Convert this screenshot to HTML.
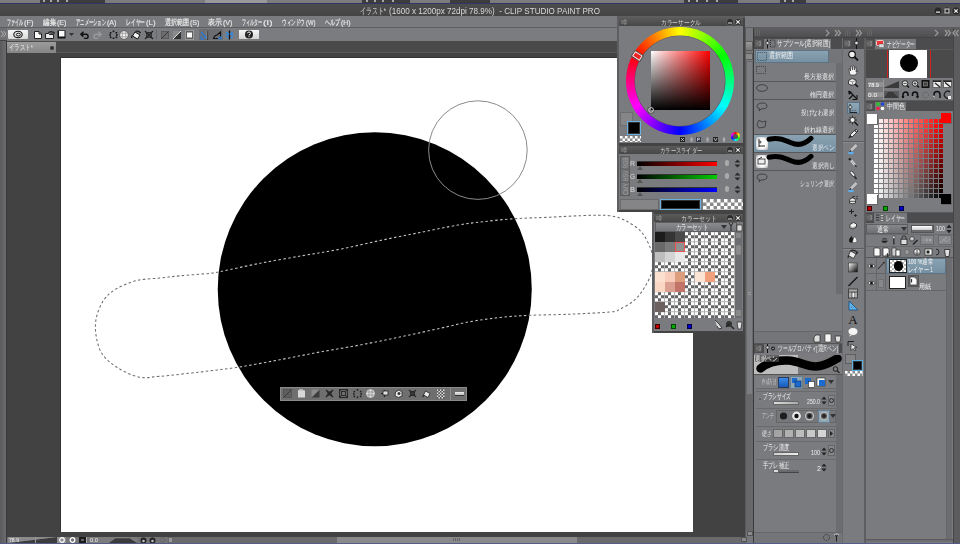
<!DOCTYPE html><html><head><meta charset='utf-8'><style>
*{margin:0;padding:0;box-sizing:border-box}
html,body{width:960px;height:544px;overflow:hidden;background:#444;font-family:"Liberation Sans",sans-serif}
div{position:absolute}
.t{white-space:nowrap;line-height:1;transform-origin:0 0}
</style></head><body>
<div style="left:0px;top:0px;width:960px;height:3px;background:#7c7c7e"></div>
<div style="left:40px;top:0px;width:65px;height:3px;background:#3c3c3c"></div>
<div style="left:362px;top:0px;width:48px;height:3px;background:#3c3c3c"></div>
<div style="left:450px;top:0px;width:40px;height:3px;background:#3c3c3c"></div>
<div style="left:684px;top:0px;width:54px;height:3px;background:#3c3c3c"></div>
<div style="left:780px;top:0px;width:26px;height:3px;background:#3c3c3c"></div>
<div style="left:43px;top:0px;width:2px;height:2px;background:#a8a8a8"></div>
<div style="left:50px;top:0px;width:2px;height:2px;background:#a8a8a8"></div>
<div style="left:57px;top:0px;width:2px;height:2px;background:#a8a8a8"></div>
<div style="left:66px;top:0px;width:2px;height:2px;background:#a8a8a8"></div>
<div style="left:366px;top:0px;width:2px;height:2px;background:#a8a8a8"></div>
<div style="left:374px;top:0px;width:2px;height:2px;background:#a8a8a8"></div>
<div style="left:382px;top:0px;width:2px;height:2px;background:#a8a8a8"></div>
<div style="left:392px;top:0px;width:2px;height:2px;background:#a8a8a8"></div>
<div style="left:688px;top:0px;width:2px;height:2px;background:#a8a8a8"></div>
<div style="left:696px;top:0px;width:2px;height:2px;background:#a8a8a8"></div>
<div style="left:706px;top:0px;width:2px;height:2px;background:#a8a8a8"></div>
<div style="left:716px;top:0px;width:2px;height:2px;background:#a8a8a8"></div>
<div style="left:784px;top:0px;width:2px;height:2px;background:#a8a8a8"></div>
<div style="left:792px;top:0px;width:2px;height:2px;background:#a8a8a8"></div>
<div style="left:205px;top:0px;width:62px;height:3px;background:#999"></div>
<div style="left:0px;top:3px;width:960px;height:1px;background:#2e3766"></div>
<div style="left:0px;top:4px;width:960px;height:12px;background:linear-gradient(#4d4d4d,#444)"></div>
<div class="t" id="t0" style="left:360px;top:7px;font-size:8.5px;color:#dadada;transform:scaleX(0.661);">イラスト*</div>
<div class="t" id="t1" style="left:389px;top:7px;font-size:8.5px;color:#dadada;transform:scaleX(0.952);">(1600 x 1200px 72dpi 78.9%)&nbsp; - CLIP STUDIO PAINT PRO</div>
<svg style="position:absolute;left:933px;top:6px;" width="27" height="10" viewBox="0 0 27 10"><g fill="#2a2a2a" stroke="#5a5a5a" stroke-width="0.8"><circle cx="5" cy="5" r="4.2"/><circle cx="14" cy="5" r="4.2"/><circle cx="23" cy="5" r="4.2"/></g><rect x="3" y="5.5" width="4" height="1.3" fill="#ddd"/><rect x="12" y="3" width="4" height="4" fill="none" stroke="#ddd" stroke-width="1"/><path d="M21.3,3.3 L24.7,6.7 M24.7,3.3 L21.3,6.7" stroke="#eee" stroke-width="1.2"/></svg>
<div style="left:0px;top:16px;width:960px;height:12px;background:#7a7b7e;border-bottom:1px solid #5e5e60"></div>
<div class="t" id="t2" style="left:7px;top:18.5px;font-size:8px;color:#e8e8e8;transform:scaleX(0.500);-webkit-text-stroke:0.2px #e8e8e8;">ファイル</div>
<div class="t" id="t3" style="left:23.5px;top:18.5px;font-size:8px;color:#e8e8e8;transform:scaleX(0.930);-webkit-text-stroke:0.15px #e8e8e8;">(F)</div>
<div class="t" id="t4" style="left:43px;top:18.5px;font-size:8px;color:#e8e8e8;transform:scaleX(0.812);-webkit-text-stroke:0.2px #e8e8e8;">編集</div>
<div class="t" id="t5" style="left:56.5px;top:18.5px;font-size:8px;color:#e8e8e8;transform:scaleX(0.890);-webkit-text-stroke:0.15px #e8e8e8;">(E)</div>
<div class="t" id="t6" style="left:76px;top:18.5px;font-size:8px;color:#e8e8e8;transform:scaleX(0.536);-webkit-text-stroke:0.2px #e8e8e8;">アニメーション</div>
<div class="t" id="t7" style="left:106.5px;top:18.5px;font-size:8px;color:#e8e8e8;transform:scaleX(0.890);-webkit-text-stroke:0.15px #e8e8e8;">(A)</div>
<div class="t" id="t8" style="left:126px;top:18.5px;font-size:8px;color:#e8e8e8;transform:scaleX(0.594);-webkit-text-stroke:0.2px #e8e8e8;">レイヤー</div>
<div class="t" id="t9" style="left:145.5px;top:18.5px;font-size:8px;color:#e8e8e8;transform:scaleX(0.971);-webkit-text-stroke:0.15px #e8e8e8;">(L)</div>
<div class="t" id="t10" style="left:165px;top:18.5px;font-size:8px;color:#e8e8e8;transform:scaleX(0.750);-webkit-text-stroke:0.2px #e8e8e8;">選択範囲</div>
<div class="t" id="t11" style="left:189.5px;top:18.5px;font-size:8px;color:#e8e8e8;transform:scaleX(0.890);-webkit-text-stroke:0.15px #e8e8e8;">(S)</div>
<div class="t" id="t12" style="left:208px;top:18.5px;font-size:8px;color:#e8e8e8;transform:scaleX(0.875);-webkit-text-stroke:0.2px #e8e8e8;">表示</div>
<div class="t" id="t13" style="left:222.5px;top:18.5px;font-size:8px;color:#e8e8e8;transform:scaleX(0.890);-webkit-text-stroke:0.15px #e8e8e8;">(V)</div>
<div class="t" id="t14" style="left:242px;top:18.5px;font-size:8px;color:#e8e8e8;transform:scaleX(0.500);-webkit-text-stroke:0.2px #e8e8e8;">フィルター</div>
<div class="t" id="t15" style="left:262.5px;top:18.5px;font-size:8px;color:#e8e8e8;transform:scaleX(1.256);-webkit-text-stroke:0.15px #e8e8e8;">(I)</div>
<div class="t" id="t16" style="left:282px;top:18.5px;font-size:8px;color:#e8e8e8;transform:scaleX(0.575);-webkit-text-stroke:0.2px #e8e8e8;">ウィンドウ</div>
<div class="t" id="t17" style="left:305.5px;top:18.5px;font-size:8px;color:#e8e8e8;transform:scaleX(0.737);-webkit-text-stroke:0.15px #e8e8e8;">(W)</div>
<div class="t" id="t18" style="left:325px;top:18.5px;font-size:8px;color:#e8e8e8;transform:scaleX(0.625);-webkit-text-stroke:0.2px #e8e8e8;">ヘルプ</div>
<div class="t" id="t19" style="left:340.5px;top:18.5px;font-size:8px;color:#e8e8e8;transform:scaleX(0.855);-webkit-text-stroke:0.15px #e8e8e8;">(H)</div>
<div style="left:0px;top:28px;width:960px;height:13px;background:#7b7c7f"></div>
<svg style="position:absolute;left:0px;top:30px;" width="7" height="8" viewBox="0 0 7 8"><path d="M1,1 L3.5,4 L1,7 M3.5,1 L6,4 L3.5,7" stroke="#aaa" stroke-width="1" fill="none"/></svg>
<div style="left:8px;top:30px;width:20px;height:9px;background:linear-gradient(#f6f6f6,#d8d8d8);border-radius:1px"></div>
<svg style="position:absolute;left:13px;top:30px;" width="10" height="9" viewBox="0 0 10 9"><ellipse cx="5" cy="4.5" rx="4.2" ry="3.2" fill="none" stroke="#111" stroke-width="1.1"/><ellipse cx="5.4" cy="4.6" rx="2.1" ry="1.4" fill="none" stroke="#111" stroke-width="1"/></svg>
<svg style="position:absolute;left:34px;top:31px;" width="8" height="8" viewBox="0 0 8 8"><path d="M0.5,0.5 H5 L7.5,3 V7.5 H0.5 Z" fill="#fafafa" stroke="#222" stroke-width="1"/><path d="M5,0.5 V3 H7.5" fill="none" stroke="#222"/></svg>
<svg style="position:absolute;left:45px;top:31px;" width="10" height="8" viewBox="0 0 10 8"><path d="M0.5,2.5 H3.5 L4.5,3.5 H8.5 V7.5 H0.5 Z" fill="#e8e8e8" stroke="#222"/><path d="M3,1.5 L6,0.5 L9.5,1.5 L8.5,3.5" fill="#555" stroke="#222"/></svg>
<svg style="position:absolute;left:57px;top:30px;" width="10" height="9" viewBox="0 0 10 9"><rect x="0.5" y="0.5" width="8" height="8" fill="#111"/><rect x="2" y="1" width="5.5" height="5.5" fill="#fafafa"/></svg>
<svg style="position:absolute;left:69px;top:33px;" width="5" height="3" viewBox="0 0 5 3"><path d="M0,0 H5 L2.5,3 Z" fill="#333"/></svg>
<svg style="position:absolute;left:80px;top:31px;" width="10" height="8" viewBox="0 0 10 8"><path d="M3.5,0.8 L0.8,3.2 L3.5,5.6 M1,3.2 H6.5 A2.3,2.3 0 0 1 6.5,7.6 H4" fill="none" stroke="#111" stroke-width="1.5"/></svg>
<svg style="position:absolute;left:92px;top:31px;" width="10" height="8" viewBox="0 0 10 8"><path d="M6.5,0.8 L9.2,3.2 L6.5,5.6 M9,3.2 H3.5 A2.3,2.3 0 0 0 3.5,7.6 H6" fill="none" stroke="#9a9a9a" stroke-width="1.5"/></svg>
<svg style="position:absolute;left:109px;top:30px;" width="9" height="9" viewBox="0 0 9 9"><rect x="3.7" y="0.5" width="1.6" height="1.6" fill="#111"/><rect x="0.8" y="2" width="1.6" height="1.6" fill="#111"/><rect x="6.6" y="2" width="1.6" height="1.6" fill="#111"/><rect x="0.3" y="4.2" width="1.6" height="1.6" fill="#111"/><rect x="7" y="4.2" width="1.6" height="1.6" fill="#111"/><rect x="0.8" y="6.5" width="1.6" height="1.6" fill="#111"/><rect x="6.6" y="6.5" width="1.6" height="1.6" fill="#111"/><rect x="3.7" y="7.5" width="1.6" height="1.6" fill="#111"/></svg>
<svg style="position:absolute;left:119px;top:30px;" width="10" height="10" viewBox="0 0 10 10"><circle cx="5" cy="5" r="4.3" fill="#eee" stroke="#555" stroke-width="0.8"/><path d="M3.3,1 V9 M6.7,1 V9 M1,3.3 H9 M1,6.7 H9" stroke="#999" stroke-width="0.8"/></svg>
<svg style="position:absolute;left:131px;top:30px;" width="11" height="10" viewBox="0 0 11 10"><path d="M4,2 L9,5 L6.5,9 L1.5,6 Z" fill="#f2f2f2" stroke="#111"/><path d="M1,5.5 L0.5,8 M4.5,1.5 Q7,0 9.5,3" stroke="#111" fill="none" stroke-width="1.2"/></svg>
<svg style="position:absolute;left:144px;top:30px;" width="10" height="10" viewBox="0 0 10 10"><path d="M1,1 L9,9 M9,1 L1,9" stroke="#222" stroke-width="1.3"/><rect x="2.7" y="2.7" width="4.6" height="4.6" fill="none" stroke="#222" stroke-width="1"/></svg>
<div style="left:156px;top:30px;width:1px;height:9px;background:#686868"></div>
<svg style="position:absolute;left:161px;top:31px;" width="8" height="8" viewBox="0 0 8 8"><rect x="0.5" y="0.5" width="7" height="7" fill="#6e6e6e" stroke="#5a5a5a"/><path d="M0.5,7.5 L7.5,0.5" stroke="#333" stroke-width="1"/></svg>
<svg style="position:absolute;left:173px;top:31px;" width="8" height="8" viewBox="0 0 8 8"><path d="M0,8 L8,0 V8 Z" fill="#333"/><path d="M0,0 H8 L0,8 Z" fill="#8a8a8a"/><path d="M0,8 L8,0" stroke="#ddd"/></svg>
<svg style="position:absolute;left:185px;top:30px;" width="9" height="10" viewBox="0 0 9 10"><rect x="0.5" y="0.5" width="8" height="9" fill="#5e5e5e" stroke="#999"/><rect x="2" y="2.5" width="5" height="5" fill="#fafafa"/></svg>
<div style="left:199px;top:29px;width:24px;height:11px;background:#6c6d70"></div>
<svg style="position:absolute;left:200px;top:30px;" width="9" height="10" viewBox="0 0 9 10"><path d="M1,2 L7.5,9" stroke="#2a7ad8" stroke-width="1.5"/><path d="M7.5,1 V9.5" stroke="#111" stroke-width="1.2"/><path d="M7,1 V9" stroke="#eee" stroke-width="0.5"/><path d="M1,9 H4 M1,6 V9" stroke="#2a7ad8" stroke-width="1.3"/></svg>
<svg style="position:absolute;left:212px;top:30px;" width="10" height="10" viewBox="0 0 10 10"><path d="M1.5,8.5 Q2,5.5 5,5 L8.5,2 V8.5 Z" fill="none" stroke="#111" stroke-width="1.1"/><path d="M6,8.5 H9 V6" stroke="#2a7ad8" stroke-width="1.4" fill="none"/></svg>
<svg style="position:absolute;left:225px;top:30px;" width="9" height="10" viewBox="0 0 9 10"><path d="M4.5,0.5 V9.5" stroke="#111" stroke-width="1.4"/><path d="M1,2 L3.5,4 L1,5.5 M8,2 L5.5,4 L8,5.5 M1,6.5 L3.5,8 M8,6.5 L5.5,8" stroke="#2a8ae8" stroke-width="1.3" fill="none"/></svg>
<div style="left:239px;top:30px;width:20px;height:9px;background:linear-gradient(#f6f6f6,#d4d4d4)"></div>
<svg style="position:absolute;left:244px;top:30px;" width="10" height="9" viewBox="0 0 10 9"><circle cx="5" cy="4.5" r="4" fill="#222"/><path d="M3.5,3.3 Q3.5,2 5,2 Q6.5,2 6.5,3.3 Q6.5,4.2 5,4.8 V5.5" stroke="#eee" stroke-width="1" fill="none"/><rect x="4.5" y="6.2" width="1" height="1" fill="#eee"/></svg>
<div style="left:0px;top:28px;width:7px;height:515px;background:linear-gradient(to right,#5a5a5c,#6c6c6e);border-right:1px solid #38383a"></div>
<div style="left:0px;top:28px;width:7px;height:13px;background:#707073;border-bottom:1px solid #444"></div>
<svg style="position:absolute;left:0px;top:30px;" width="7" height="8" viewBox="0 0 7 8"><path d="M1,1 L3.5,4 L1,7 M3.5,1 L6,4 L3.5,7" stroke="#b0b0b0" stroke-width="1" fill="none"/></svg>
<div style="left:7px;top:41px;width:740px;height:12px;background:#4a4a4a;border-bottom:1px solid #5a5a5a"></div>
<div style="left:7px;top:42px;width:49px;height:11px;background:linear-gradient(#9c9c9c,#858585)"></div>
<div class="t" id="t20" style="left:9px;top:44px;font-size:8px;color:#e8e8e8;transform:scaleX(0.683);">イラスト*</div>
<div style="left:49.5px;top:45.5px;width:4px;height:4px;border-radius:50%;background:#333"></div>
<div style="left:7px;top:53px;width:740px;height:484px;background:#424242"></div>
<div style="left:61px;top:58px;width:632px;height:474px;background:#fff;box-shadow:-1px -1px 0 #333"></div>
<svg style="position:absolute;left:0;top:0" width="960" height="544" viewBox="0 0 960 544">
<defs><clipPath id="cv"><rect x="61" y="58" width="632" height="474"/></clipPath>
<clipPath id="inC"><circle cx="374.75" cy="289.25" r="157"/></clipPath>
<mask id="outC"><rect x="0" y="0" width="960" height="544" fill="#fff"/><circle cx="374.75" cy="289.25" r="157" fill="#000"/></mask></defs>
<g clip-path="url(#cv)">
<circle cx="374.75" cy="289.25" r="157" fill="#000"/>
<g mask="url(#outC)">
<circle cx="477.9" cy="150.1" r="49.3" fill="none" stroke="#8a8a8a" stroke-width="1"/>
<path d="M115.4,289.4 C120.9,286.0 128.9,282.5 136.3,280.6 C143.7,278.7 152.7,278.8 160.0,278.0 C167.3,277.2 171.7,276.6 180.0,275.8 C188.3,275.0 203.0,274.1 210.0,273.3 C217.0,272.5 213.7,272.9 222.0,271.2 C230.3,269.5 246.7,265.9 260.0,263.3 C273.3,260.7 288.4,258.2 301.7,255.8 C315.0,253.5 326.9,251.8 340.0,249.2 C353.1,246.6 366.7,243.3 380.0,240.5 C393.3,237.7 406.9,235.1 420.0,232.5 C433.1,229.9 447.8,226.8 458.3,225.0 C468.9,223.2 473.9,222.8 483.3,221.7 C492.8,220.6 503.9,219.4 515.0,218.7 C526.1,217.9 537.2,217.8 550.0,217.2 C562.8,216.6 581.7,215.5 591.7,215.3 C601.7,215.1 604.5,215.0 610.0,215.8 C615.5,216.6 619.6,217.6 624.9,220.3 C630.2,223.0 637.2,227.2 641.6,232.2 C646.0,237.2 649.3,245.1 651.1,250.1 C652.9,255.1 652.5,258.0 652.5,262.0 C652.5,266.0 652.5,269.6 651.1,274.0 C649.7,278.4 646.8,283.9 644.0,288.3 C641.2,292.7 638.4,296.7 634.4,300.2 C630.4,303.7 624.1,307.2 620.0,309.2 C615.9,311.2 618.3,311.2 610.0,312.0 C601.7,312.8 583.3,313.6 570.0,314.2 C556.7,314.8 541.7,314.8 530.0,315.3 C518.3,315.9 510.0,316.4 500.0,317.5 C490.0,318.6 480.0,319.9 470.0,321.7 C460.0,323.5 451.7,325.8 440.0,328.3 C428.3,330.9 413.3,334.2 400.0,337.0 C386.7,339.8 373.3,342.5 360.0,345.0 C346.7,347.5 333.3,349.6 320.0,352.0 C306.7,354.4 293.6,357.2 280.0,359.7 C266.4,362.2 251.6,365.1 238.3,367.2 C225.0,369.2 213.1,370.5 200.0,372.0 C186.9,373.5 170.2,375.5 160.0,376.3 C149.8,377.1 145.8,378.6 138.5,377.0 C131.2,375.4 122.6,370.9 116.5,367.0 C110.4,363.1 105.5,358.9 102.1,353.8 C98.7,348.7 97.2,342.1 96.2,336.2 C95.2,330.3 95.0,324.4 96.2,318.5 C97.4,312.6 100.0,305.8 103.2,300.9 C106.4,296.0 109.9,292.8 115.4,289.4 Z" fill="none" stroke="#6c6c6c" stroke-width="1.05" stroke-dasharray="2.5 2.4"/>
</g>
<g clip-path="url(#inC)">
<circle cx="477.9" cy="150.1" r="49.3" fill="none" stroke="#8a8a8a" stroke-width="1"/>
<path d="M115.4,289.4 C120.9,286.0 128.9,282.5 136.3,280.6 C143.7,278.7 152.7,278.8 160.0,278.0 C167.3,277.2 171.7,276.6 180.0,275.8 C188.3,275.0 203.0,274.1 210.0,273.3 C217.0,272.5 213.7,272.9 222.0,271.2 C230.3,269.5 246.7,265.9 260.0,263.3 C273.3,260.7 288.4,258.2 301.7,255.8 C315.0,253.5 326.9,251.8 340.0,249.2 C353.1,246.6 366.7,243.3 380.0,240.5 C393.3,237.7 406.9,235.1 420.0,232.5 C433.1,229.9 447.8,226.8 458.3,225.0 C468.9,223.2 473.9,222.8 483.3,221.7 C492.8,220.6 503.9,219.4 515.0,218.7 C526.1,217.9 537.2,217.8 550.0,217.2 C562.8,216.6 581.7,215.5 591.7,215.3 C601.7,215.1 604.5,215.0 610.0,215.8 C615.5,216.6 619.6,217.6 624.9,220.3 C630.2,223.0 637.2,227.2 641.6,232.2 C646.0,237.2 649.3,245.1 651.1,250.1 C652.9,255.1 652.5,258.0 652.5,262.0 C652.5,266.0 652.5,269.6 651.1,274.0 C649.7,278.4 646.8,283.9 644.0,288.3 C641.2,292.7 638.4,296.7 634.4,300.2 C630.4,303.7 624.1,307.2 620.0,309.2 C615.9,311.2 618.3,311.2 610.0,312.0 C601.7,312.8 583.3,313.6 570.0,314.2 C556.7,314.8 541.7,314.8 530.0,315.3 C518.3,315.9 510.0,316.4 500.0,317.5 C490.0,318.6 480.0,319.9 470.0,321.7 C460.0,323.5 451.7,325.8 440.0,328.3 C428.3,330.9 413.3,334.2 400.0,337.0 C386.7,339.8 373.3,342.5 360.0,345.0 C346.7,347.5 333.3,349.6 320.0,352.0 C306.7,354.4 293.6,357.2 280.0,359.7 C266.4,362.2 251.6,365.1 238.3,367.2 C225.0,369.2 213.1,370.5 200.0,372.0 C186.9,373.5 170.2,375.5 160.0,376.3 C149.8,377.1 145.8,378.6 138.5,377.0 C131.2,375.4 122.6,370.9 116.5,367.0 C110.4,363.1 105.5,358.9 102.1,353.8 C98.7,348.7 97.2,342.1 96.2,336.2 C95.2,330.3 95.0,324.4 96.2,318.5 C97.4,312.6 100.0,305.8 103.2,300.9 C106.4,296.0 109.9,292.8 115.4,289.4 Z" fill="none" stroke="#c0c0c0" stroke-width="1.1" stroke-dasharray="2.5 2.4"/>
</g>
</g></svg>
<div style="left:280px;top:387px;width:187px;height:14px;background:#6f6f6f;border:1px solid #8a8a8a"></div>
<svg style="position:absolute;left:283px;top:389px;" width="9" height="10" viewBox="0 0 9 10"><rect x="0.5" y="0.5" width="8" height="8" fill="#5e5e5e" stroke="#555"/><path d="M0.5,8.5 L8.5,0.5" stroke="#3a3a3a"/></svg>
<svg style="position:absolute;left:297px;top:389px;" width="9" height="10" viewBox="0 0 9 10"><rect x="1" y="1.5" width="7" height="7" fill="#d8d8d8"/><path d="M1,1.5 h1.5 v-1 h1 v1 h1 v-1 h1 v1 h1.5" fill="#d8d8d8" stroke="#d8d8d8" stroke-width="0.6"/></svg>
<svg style="position:absolute;left:311px;top:389px;" width="9" height="10" viewBox="0 0 9 10"><path d="M0.5,8.5 L8.5,0.5 V8.5 Z" fill="#3c3c3c"/><path d="M0.5,0.5 H8.5 L0.5,8.5 Z" fill="#8c8c8c"/></svg>
<svg style="position:absolute;left:325px;top:389px;" width="9" height="10" viewBox="0 0 9 10"><path d="M1,1 L8,8 M8,1 L1,8" stroke="#222" stroke-width="1.4"/><rect x="3" y="3" width="3" height="3" fill="none" stroke="#222"/></svg>
<svg style="position:absolute;left:339px;top:389px;" width="9" height="10" viewBox="0 0 9 10"><rect x="0.5" y="0.5" width="8" height="8" fill="none" stroke="#2a2a2a" stroke-width="1.2"/><rect x="2.5" y="2.5" width="4" height="4" fill="none" stroke="#2a2a2a"/><path d="M1,1 L3,3 M8,1 L6,3 M1,8 L3,6 M8,8 L6,6" stroke="#2a2a2a"/></svg>
<svg style="position:absolute;left:353px;top:389px;" width="9" height="10" viewBox="0 0 9 10"><rect x="3.7" y="0" width="1.6" height="1.6" fill="#222"/><rect x="0.5" y="1.8" width="1.6" height="1.6" fill="#222"/><rect x="6.9" y="1.8" width="1.6" height="1.6" fill="#222"/><rect x="0" y="4.2" width="1.6" height="1.6" fill="#222"/><rect x="7.4" y="4.2" width="1.6" height="1.6" fill="#222"/><rect x="0.5" y="6.6" width="1.6" height="1.6" fill="#222"/><rect x="6.9" y="6.6" width="1.6" height="1.6" fill="#222"/><rect x="3.7" y="7.6" width="1.6" height="1.6" fill="#222"/></svg>
<svg style="position:absolute;left:366px;top:389px;" width="9" height="10" viewBox="0 0 9 10"><circle cx="4.5" cy="4.5" r="4.3" fill="#e6e6e6"/><path d="M3,0.5 V8.5 M6,0.5 V8.5 M0.5,3 H8.5 M0.5,6 H8.5" stroke="#888" stroke-width="0.8"/></svg>
<svg style="position:absolute;left:380px;top:389px;" width="9" height="10" viewBox="0 0 9 10"><path d="M1,4.5 H8 M4.5,1 V8" stroke="#222" stroke-width="1"/><rect x="3" y="2" width="5" height="4" fill="#e0e0e0" stroke="#222" stroke-width="0.8"/></svg>
<svg style="position:absolute;left:394px;top:389px;" width="9" height="10" viewBox="0 0 9 10"><path d="M1.5,3 L5,1 L8,3 V7 L4.5,8.5 L1,7 Z" fill="#e6e6e6" stroke="#222" stroke-width="0.8"/><circle cx="5" cy="4.5" r="1.5" fill="#333"/></svg>
<svg style="position:absolute;left:408px;top:389px;" width="9" height="10" viewBox="0 0 9 10"><path d="M1,1 L8,8 M8,1 L1,8" stroke="#2a2a2a" stroke-width="1.2"/><rect x="2.5" y="2.5" width="4" height="4" fill="none" stroke="#2a2a2a"/></svg>
<svg style="position:absolute;left:422px;top:389px;" width="9" height="10" viewBox="0 0 9 10"><path d="M3.5,2 L8,4.5 L6,8.5 L1.5,6 Z" fill="#eaeaea" stroke="#222" stroke-width="0.8"/><path d="M0.5,8 L2,6" stroke="#222" stroke-width="1.2"/></svg>
<svg style="position:absolute;left:436px;top:389px;" width="9" height="10" viewBox="0 0 9 10"><rect x="1" y="0.5" width="1.5" height="1.5" fill="#ddd"/><rect x="1" y="2" width="1.5" height="1.5" fill="#555"/><rect x="1" y="3.5" width="1.5" height="1.5" fill="#ddd"/><rect x="1" y="5" width="1.5" height="1.5" fill="#555"/><rect x="1" y="6.5" width="1.5" height="1.5" fill="#ddd"/><rect x="1" y="8" width="1.5" height="1.5" fill="#555"/><rect x="2.5" y="0.5" width="1.5" height="1.5" fill="#555"/><rect x="2.5" y="2" width="1.5" height="1.5" fill="#ddd"/><rect x="2.5" y="3.5" width="1.5" height="1.5" fill="#555"/><rect x="2.5" y="5" width="1.5" height="1.5" fill="#ddd"/><rect x="2.5" y="6.5" width="1.5" height="1.5" fill="#555"/><rect x="2.5" y="8" width="1.5" height="1.5" fill="#ddd"/><rect x="4" y="0.5" width="1.5" height="1.5" fill="#ddd"/><rect x="4" y="2" width="1.5" height="1.5" fill="#555"/><rect x="4" y="3.5" width="1.5" height="1.5" fill="#ddd"/><rect x="4" y="5" width="1.5" height="1.5" fill="#555"/><rect x="4" y="6.5" width="1.5" height="1.5" fill="#ddd"/><rect x="4" y="8" width="1.5" height="1.5" fill="#555"/><rect x="5.5" y="0.5" width="1.5" height="1.5" fill="#555"/><rect x="5.5" y="2" width="1.5" height="1.5" fill="#ddd"/><rect x="5.5" y="3.5" width="1.5" height="1.5" fill="#555"/><rect x="5.5" y="5" width="1.5" height="1.5" fill="#ddd"/><rect x="5.5" y="6.5" width="1.5" height="1.5" fill="#555"/><rect x="5.5" y="8" width="1.5" height="1.5" fill="#ddd"/><rect x="7" y="0.5" width="1.5" height="1.5" fill="#ddd"/><rect x="7" y="2" width="1.5" height="1.5" fill="#555"/><rect x="7" y="3.5" width="1.5" height="1.5" fill="#ddd"/><rect x="7" y="5" width="1.5" height="1.5" fill="#555"/><rect x="7" y="6.5" width="1.5" height="1.5" fill="#ddd"/><rect x="7" y="8" width="1.5" height="1.5" fill="#555"/></svg>
<div style="left:450px;top:388px;width:1px;height:12px;background:#8c8c8c"></div>
<div style="left:455px;top:392px;width:9px;height:4px;background:linear-gradient(#eee,#bbb);border-bottom:1px solid #333"></div>
<div style="left:747px;top:41px;width:6px;height:501px;background:#77787b"></div>
<div style="left:7px;top:537px;width:740px;height:6px;background:#6a6a6c"></div>
<div style="left:337px;top:537px;width:240px;height:6px;background:#8a8a8c"></div>
<div style="left:7px;top:537px;width:166px;height:6px;background:#747476"></div>
<svg style="position:absolute;left:8px;top:537px;" width="49" height="6" viewBox="0 0 49 6"><path d="M0,6 L49,0 V6 Z" fill="#3c3c3c"/><path d="M0,0 H49 L0,6 Z" fill="#8a8a8a"/><rect x="27" y="0" width="1" height="6" fill="#999"/></svg>
<div class="t" id="t21" style="left:9px;top:537px;font-size:6px;color:#f0f0f0;transform:scaleX(0.856);">78.9</div>
<div style="left:57px;top:537px;width:9px;height:6px;background:#8e8e8e"></div>
<svg style="position:absolute;left:59px;top:537px;" width="6" height="6" viewBox="0 0 6 6"><circle cx="3" cy="3" r="2.3" fill="none" stroke="#fff" stroke-width="1.2"/></svg>
<svg style="position:absolute;left:69px;top:537px;" width="7" height="6" viewBox="0 0 7 6"><circle cx="3.5" cy="3" r="2.3" fill="none" stroke="#fff" stroke-width="1.3"/></svg>
<div style="left:79px;top:537px;width:7px;height:6px;background:#1a1a1a"></div>
<div style="left:81px;top:539px;width:3px;height:2px;background:#666"></div>
<div style="left:86px;top:537px;width:1px;height:6px;background:#aaa"></div>
<svg style="position:absolute;left:89px;top:537px;" width="48" height="6" viewBox="0 0 48 6"><path d="M0,0 H48 V6 H0 Z" fill="#7c7c7c"/><path d="M20,6 L27,1 H40 L48,6 Z" fill="#3a3a3a"/><path d="M27,1 H40" stroke="#999" stroke-width="0.5"/></svg>
<div class="t" id="t22" style="left:90px;top:537px;font-size:6px;color:#f0f0f0;transform:scaleX(0.959);">0.0</div>
<svg style="position:absolute;left:139px;top:537px;" width="34" height="6" viewBox="0 0 34 6"><circle cx="4.5" cy="3.5" r="3" fill="#222"/><circle cx="4.5" cy="4" r="1.3" fill="#bbb"/><circle cx="13.5" cy="3.5" r="3" fill="#222"/><circle cx="13.5" cy="4" r="1.3" fill="#bbb"/><circle cx="23.5" cy="3" r="2.3" fill="none" stroke="#555" stroke-width="0.8" stroke-dasharray="1 1"/><rect x="29.5" y="0.5" width="4" height="5" fill="#999" stroke="#555" stroke-width="0.6"/></svg>
<div style="left:453px;top:538px;width:8px;height:3px;background:repeating-linear-gradient(90deg,#666 0 1px,transparent 1px 2px)"></div>
<div style="left:747px;top:531px;width:6px;height:5px;background:#8a8a8a;border:1px solid #555"></div>
<div style="left:741px;top:537px;width:6px;height:5px;background:#8a8a8a;border:1px solid #555"></div>
<div style="left:0px;top:543px;width:960px;height:1px;background:#575b8c"></div>
<div style="left:753px;top:28px;width:207px;height:515px;background:#7a7b7e"></div>
<div style="left:753px;top:28px;width:207px;height:10px;background:linear-gradient(#606063,#4e4e50);border-bottom:1px solid #444"></div>
<svg style="position:absolute;left:755px;top:30px;" width="5" height="6" viewBox="0 0 5 6"><path d="M0.5,0 V6 M2.5,0 V6 M4.5,0 V6" stroke="#6a6a6a" stroke-width="0.8"/></svg>
<svg style="position:absolute;left:845px;top:30px;" width="5" height="6" viewBox="0 0 5 6"><path d="M0.5,0 V6 M2.5,0 V6 M4.5,0 V6" stroke="#6a6a6a" stroke-width="0.8"/></svg>
<svg style="position:absolute;left:867px;top:30px;" width="5" height="6" viewBox="0 0 5 6"><path d="M0.5,0 V6 M2.5,0 V6 M4.5,0 V6" stroke="#6a6a6a" stroke-width="0.8"/></svg>
<svg style="position:absolute;left:825px;top:29px;" width="5" height="8" viewBox="0 0 5 8"><path d="M1,1 L4,4 L1,7" stroke="#9a9a9a" stroke-width="1.2" fill="none"/></svg>
<svg style="position:absolute;left:834px;top:29px;" width="8" height="8" viewBox="0 0 8 8"><path d="M1,1 L3.5,4 L1,7 M4,1 L6.5,4 L4,7" stroke="#9a9a9a" stroke-width="1.2" fill="none"/></svg>
<svg style="position:absolute;left:855px;top:29px;" width="8" height="8" viewBox="0 0 8 8"><path d="M1,1 L3.5,4 L1,7 M4,1 L6.5,4 L4,7" stroke="#9a9a9a" stroke-width="1.2" fill="none"/></svg>
<svg style="position:absolute;left:934px;top:29px;" width="5" height="8" viewBox="0 0 5 8"><path d="M1,1 L4,4 L1,7" stroke="#9a9a9a" stroke-width="1.2" fill="none"/></svg>
<svg style="position:absolute;left:944px;top:29px;" width="8" height="8" viewBox="0 0 8 8"><path d="M1,1 L3.5,4 L1,7 M4,1 L6.5,4 L4,7" stroke="#9a9a9a" stroke-width="1.2" fill="none"/></svg>
<div style="left:953px;top:28px;width:7px;height:515px;background:#5c5c5e;border-left:1px solid #444"></div>
<svg style="position:absolute;left:952px;top:29px;" width="8" height="8" viewBox="0 0 8 8"><path d="M3.5,1 L1,4 L3.5,7 M6.5,1 L4,4 L6.5,7" stroke="#9a9a9a" stroke-width="1.2" fill="none"/></svg>
<div style="left:745px;top:28px;width:8px;height:515px;background:#77787b;border-left:1px solid #5a5a5a"></div>
<div style="left:745px;top:41px;width:8px;height:10px;background:linear-gradient(#999,#777);border:1px solid #5a5a5a;border-radius:1px"></div>
<div style="left:745px;top:53px;width:8px;height:7px;background:#8a8a8a;border:1px solid #5a5a5a"></div>
<div style="left:746px;top:61px;width:7px;height:334px;background:#7c7d80;border:1px solid #6a6a6c"></div>
<div style="left:746px;top:395px;width:7px;height:136px;background:#68686a"></div>
<div style="left:748px;top:292px;width:3px;height:4px;background:repeating-linear-gradient(#999 0 1px,transparent 1px 2px)"></div>
<div style="left:753px;top:28px;width:1px;height:515px;background:#3a3a3a"></div>
<div style="left:842px;top:38px;width:1px;height:505px;background:#6a6a6c"></div>
<div style="left:864px;top:38px;width:2px;height:505px;background:#5e5e60"></div>
<div style="left:754px;top:38px;width:88px;height:11px;background:#4c4c4e"></div>
<svg style="position:absolute;left:755px;top:40px;" width="7" height="7" viewBox="0 0 7 7"><rect x="0.5" y="0.5" width="6" height="6" fill="#555" stroke="#666" stroke-width="0.5"/><path d="M2,1.5 V5.5 M4,1.5 V5.5 M4,1.5 H5.5 V5.5 H4" stroke="#999" stroke-width="0.7" fill="none"/></svg>
<div style="left:764px;top:39px;width:67px;height:10px;background:#77787b"></div>
<svg style="position:absolute;left:765px;top:39px;" width="11" height="10" viewBox="0 0 11 10"><path d="M2.5,0.5 V9.5" stroke="#111" stroke-width="1"/><circle cx="2.5" cy="4" r="1.6" fill="#ddd" stroke="#111" stroke-width="0.6"/><rect x="5.5" y="1" width="4.5" height="7" fill="none" stroke="#222" stroke-width="0.8" stroke-dasharray="1 1"/></svg>
<div class="t" id="t23" style="left:777px;top:40px;font-size:7.5px;color:#eee;transform:scaleX(0.696);">サブツール[選択範囲]</div>
<div style="left:754px;top:49px;width:88px;height:245px;background:#7a7b7e"></div>
<div style="left:755px;top:50px;width:74px;height:13px;background:linear-gradient(#8aa2b2,#7590a2);border:1px solid #5d7384"></div>
<svg style="position:absolute;left:757px;top:52px;" width="10" height="9" viewBox="0 0 10 9"><rect x="0.5" y="0.5" width="9" height="8" fill="none" stroke="#3a4a58" stroke-width="0.8" stroke-dasharray="1.2 1"/></svg>
<div class="t" id="t24" style="left:769px;top:52px;font-size:7.5px;color:#f4f4f4;transform:scaleX(0.750);">選択範囲</div>
<div style="left:829px;top:49px;width:13px;height:14px;background:#747578"></div>
<div style="left:754px;top:64.0px;width:82px;height:18px;background:#7a7b7e;border-bottom:1px solid #58585a"></div>
<div class="t" id="t25" style="left:804.3px;top:74.0px;font-size:6.8px;color:#f0f0f0;transform:scaleX(0.857);">長方形選択</div>
<div style="left:754px;top:81.8px;width:82px;height:18px;background:#7a7b7e;border-bottom:1px solid #58585a"></div>
<div class="t" id="t26" style="left:810.3px;top:91.8px;font-size:6.8px;color:#f0f0f0;transform:scaleX(0.857);">楕円選択</div>
<div style="left:754px;top:99.6px;width:82px;height:18px;background:#7a7b7e;border-bottom:1px solid #58585a"></div>
<div class="t" id="t27" style="left:801.3px;top:109.6px;font-size:6.8px;color:#f0f0f0;transform:scaleX(0.786);">投げなわ選択</div>
<div style="left:754px;top:117.4px;width:82px;height:18px;background:#7a7b7e;border-bottom:1px solid #58585a"></div>
<div class="t" id="t28" style="left:804.3px;top:127.4px;font-size:6.8px;color:#f0f0f0;transform:scaleX(0.857);">折れ線選択</div>
<div style="left:754px;top:135.2px;width:82px;height:18px;background:linear-gradient(#8aa2b2,#7590a2);border-bottom:1px solid #58585a"></div>
<div class="t" id="t29" style="left:811.8px;top:145.2px;font-size:6.8px;color:#f0f0f0;transform:scaleX(0.804);">選択ペン</div>
<div style="left:754px;top:153.0px;width:82px;height:18px;background:#7a7b7e;border-bottom:1px solid #58585a"></div>
<div class="t" id="t30" style="left:811.8px;top:163.0px;font-size:6.8px;color:#f0f0f0;transform:scaleX(0.804);">選択消し</div>
<div style="left:754px;top:170.8px;width:82px;height:18px;background:#7a7b7e;border-bottom:1px solid #58585a"></div>
<div class="t" id="t31" style="left:800.3px;top:180.8px;font-size:6.8px;color:#f0f0f0;transform:scaleX(0.694);">シュリンク選択</div>
<svg style="position:absolute;left:756px;top:66.0px;" width="12" height="10" viewBox="0 0 12 10"><rect x="0.5" y="0.5" width="9" height="7" fill="none" stroke="#333" stroke-width="0.8" stroke-dasharray="1.2 1"/></svg>
<svg style="position:absolute;left:756px;top:83.8px;" width="12" height="10" viewBox="0 0 12 10"><ellipse cx="6" cy="4" rx="5.5" ry="3.3" fill="none" stroke="#333" stroke-width="0.8"/></svg>
<svg style="position:absolute;left:756px;top:101.6px;" width="12" height="10" viewBox="0 0 12 10"><path d="M1,5 Q1,1 6,1 Q11,1 11,4 Q11,7 5,7 L3,9 L3.5,6.5 Q1,6 1,5" fill="none" stroke="#333" stroke-width="0.8"/></svg>
<svg style="position:absolute;left:756px;top:119.4px;" width="12" height="10" viewBox="0 0 12 10"><path d="M1,6 L3,1 L6,3 L10,2 L9,8 L3,9 Z" fill="none" stroke="#333" stroke-width="0.8"/></svg>
<div style="left:756px;top:137.2px;width:12px;height:13px;background:radial-gradient(#fff 50%,#ccc 80%,rgba(200,200,200,0))"></div>
<svg style="position:absolute;left:757px;top:138.2px;" width="10" height="10" viewBox="0 0 10 10"><path d="M2,1 V9 M2,8 H8" stroke="#222" stroke-width="1"/><circle cx="3" cy="4" r="1.5" fill="#666"/></svg>
<svg style="position:absolute;left:754px;top:135.2px;" width="60" height="18" viewBox="0 0 60 18"><path d="M15,4.3 C24,2.3 29,4.3 37,7.8 C45,11.3 51,9.3 57,3.3" fill="none" stroke="#000" stroke-width="5" stroke-linecap="round"/></svg>
<div style="left:756px;top:155.0px;width:12px;height:13px;background:radial-gradient(#fff 50%,#ccc 80%,rgba(200,200,200,0))"></div>
<svg style="position:absolute;left:757px;top:156.0px;" width="10" height="10" viewBox="0 0 10 10"><rect x="1" y="3" width="7" height="5" fill="#eee" stroke="#222" stroke-width="0.8"/><path d="M2,3 L5,1" stroke="#222"/></svg>
<svg style="position:absolute;left:754px;top:153.0px;" width="60" height="18" viewBox="0 0 60 18"><path d="M15,4.3 C24,2.3 29,4.3 37,7.8 C45,11.3 51,9.3 57,3.3" fill="none" stroke="#000" stroke-width="5" stroke-linecap="round"/></svg>
<svg style="position:absolute;left:756px;top:172.8px;" width="12" height="10" viewBox="0 0 12 10"><path d="M1,5 Q1,1 6,1 Q11,1 11,4 Q11,7 5,7 L3,9 L3.5,6.5 Q1,6 1,5" fill="none" stroke="#333" stroke-width="0.8"/></svg>
<div style="left:836px;top:63px;width:6px;height:231px;background:#6c6d70"></div>
<div style="left:754px;top:188px;width:82px;height:106px;background:#7a7b7e"></div>
<div style="left:754px;top:294px;width:88px;height:50px;background:#7a7b7e"></div>
<div style="left:754px;top:331px;width:88px;height:13px;background:#747578;border-top:1px solid #666"></div>
<svg style="position:absolute;left:813px;top:333px;" width="30" height="10" viewBox="0 0 30 10"><path d="M3,2 H7 V9 H1 V4 Z" fill="#ddd" stroke="#222" stroke-width="0.7"/><path d="M12,1 H18 V9 H12 Z" fill="#f6f6f6" stroke="#333" stroke-width="0.6"/><path d="M22,3 H28 L27,9 H23 Z" fill="#e0e0e0" stroke="#333" stroke-width="0.8"/></svg>
<div style="left:754px;top:343px;width:88px;height:1px;background:#555"></div>
<div style="left:843px;top:38px;width:21px;height:11px;background:#4c4c4e"></div>
<svg style="position:absolute;left:844px;top:40px;" width="7" height="7" viewBox="0 0 7 7"><rect x="0.5" y="0.5" width="6" height="6" fill="#555" stroke="#666" stroke-width="0.5"/><path d="M2,1.5 V5.5 M4,1.5 V5.5 M4,1.5 H5.5 V5.5 H4" stroke="#999" stroke-width="0.7" fill="none"/></svg>
<svg style="position:absolute;left:853px;top:38px;" width="8" height="11" viewBox="0 0 8 11"><path d="M3.5,0 V11" stroke="#111" stroke-width="1"/><circle cx="3.5" cy="5" r="1.8" fill="#ddd" stroke="#111" stroke-width="0.6"/></svg>
<div style="left:843px;top:49px;width:21px;height:494px;background:#7a7b7e"></div>
<svg style="position:absolute;left:847.0px;top:50.0px;" width="12" height="11" viewBox="0 0 12 11"><circle cx="5" cy="4.5" r="3.3" fill="#eee" stroke="#111" stroke-width="1.2"/><path d="M7.5,7 L11,10.5" stroke="#111" stroke-width="1.8"/></svg>
<svg style="position:absolute;left:847.0px;top:64.5px;" width="12" height="11" viewBox="0 0 12 11"><path d="M3,10 L2,5 Q1.5,3.5 2.5,3.5 L3.5,6 L3.5,1.5 Q4.5,0.8 5,1.5 L5.5,5 L6,1 Q7,0.5 7.3,1.2 L7.5,5 L8.5,2 Q9.5,1.8 9.5,2.8 L9,7 Q10.5,5 11,5.5 L8.5,10 Z" fill="#f4f4f4" stroke="#333" stroke-width="0.7"/></svg>
<svg style="position:absolute;left:847.0px;top:77.0px;" width="12" height="11" viewBox="0 0 12 11"><path d="M1.5,3.5 L5,1.5 L9,3 V6.5 L5.5,8.5 L1.5,7 Z" fill="#eee" stroke="#222" stroke-width="0.8"/><path d="M1.5,3.5 L5.5,5 L9,3 M5.5,5 V8.5" stroke="#555" stroke-width="0.6" fill="none"/><path d="M8,7 L11,10" stroke="#111" stroke-width="1.6"/></svg>
<svg style="position:absolute;left:847.0px;top:90.0px;" width="12" height="11" viewBox="0 0 12 11"><path d="M2,1 L10,9 M2,9 L6,5" stroke="#111" stroke-width="1.2"/><path d="M1,1 L5,2 L2,5 Z" fill="#111"/><path d="M5.5,9.5 L10,9.5 L10,5" stroke="#111" stroke-width="1" fill="none"/></svg>
<div style="left:847px;top:102px;width:13px;height:12px;background:linear-gradient(#8fa8b8,#7893a6);border:1px solid #5a7284"></div>
<svg style="position:absolute;left:847.0px;top:102.5px;" width="12" height="11" viewBox="0 0 12 11"><path d="M3,1 V10 M3,9.5 H10" stroke="#222" stroke-width="1"/><circle cx="3.3" cy="4" r="1.6" fill="#ccc" stroke="#222" stroke-width="0.6"/><path d="M5,7.5 H9" stroke="#555" stroke-width="0.8" stroke-dasharray="1 0.6"/></svg>
<svg style="position:absolute;left:847.0px;top:114.5px;" width="12" height="11" viewBox="0 0 12 11"><circle cx="5.5" cy="5" r="2.5" fill="#eee" stroke="#222" stroke-width="0.8"/><path d="M5.5,0.5 V2.5 M5.5,7.5 V9.5 M1,5 H3 M8,5 H10 M2.3,1.8 L3.7,3.2 M8.7,1.8 L7.3,3.2 M2.3,8.2 L3.7,6.8" stroke="#222" stroke-width="0.9"/><path d="M7.5,7 L11,10.5" stroke="#111" stroke-width="1.3"/></svg>
<svg style="position:absolute;left:847.0px;top:127.5px;" width="12" height="11" viewBox="0 0 12 11"><path d="M9,1 L11,3 L5,9 L3,7 Z" fill="#eee" stroke="#222" stroke-width="0.8"/><path d="M3,7 L1,10.5 L5,9" fill="#222"/><path d="M8,2.5 L9.5,4" stroke="#222" stroke-width="1.2"/></svg>
<div style="left:843px;top:141px;width:21px;height:1px;background:#5e5e60"></div>
<div style="left:843px;top:142px;width:21px;height:1px;background:#8a8a8c"></div>
<svg style="position:absolute;left:847.0px;top:144.0px;" width="12" height="11" viewBox="0 0 12 11"><path d="M9.5,1 L4,6.5" stroke="#f4f4f4" stroke-width="2.2"/><path d="M9.8,0.7 L4,6.5" stroke="#333" stroke-width="0.5"/><path d="M4,6.5 L2.5,8.5" stroke="#222" stroke-width="1.2"/><ellipse cx="4" cy="9" rx="3" ry="1.2" fill="#5ab0f0"/></svg>
<svg style="position:absolute;left:847.0px;top:156.8px;" width="12" height="11" viewBox="0 0 12 11"><path d="M3,2 L8,8" stroke="#f0f0f0" stroke-width="2.2"/><path d="M3,2 L8,8" stroke="#333" stroke-width="0.5"/><circle cx="3" cy="2.3" r="1.4" fill="#222"/><path d="M8,8 L9.5,10" stroke="#222" stroke-width="1.1"/></svg>
<svg style="position:absolute;left:847.0px;top:168.9px;" width="12" height="11" viewBox="0 0 12 11"><path d="M3.5,2.5 L7.5,7" stroke="#222" stroke-width="3.2"/><path d="M3.8,2.8 L7.2,6.6" stroke="#f4f4f4" stroke-width="1.8"/><path d="M7.5,7.5 L9.5,10" stroke="#222" stroke-width="1.5"/></svg>
<svg style="position:absolute;left:847.0px;top:182.1px;" width="12" height="11" viewBox="0 0 12 11"><path d="M9.5,1 L4,6.5" stroke="#f4f4f4" stroke-width="2.2"/><path d="M9.8,0.7 L4,6.5" stroke="#333" stroke-width="0.5"/><path d="M4,6.5 L2.5,8.5" stroke="#222" stroke-width="1.2"/><ellipse cx="4" cy="9" rx="3" ry="1.2" fill="#5ab0f0"/></svg>
<svg style="position:absolute;left:847.0px;top:195.2px;" width="12" height="11" viewBox="0 0 12 11"><path d="M2.5,5.5 Q2.5,3 5.5,3 Q8.5,3 8.5,5.5 V8 Q5.5,9.5 2.5,8 Z" fill="#eee" stroke="#222" stroke-width="0.8"/><path d="M2.5,6.3 H8.5" stroke="#333" stroke-width="0.9"/><path d="M5.5,3 V1.5 L8,1.5 M9,2 L11,1 M9,3.5 L11,4" stroke="#222" stroke-width="0.7" fill="none"/></svg>
<svg style="position:absolute;left:847.0px;top:207.4px;" width="12" height="11" viewBox="0 0 12 11"><path d="M4.5,2 V7 M2,4.5 H7" stroke="#222" stroke-width="1"/><path d="M8.5,7 V10 M7,8.5 H10" stroke="#222" stroke-width="0.8"/></svg>
<svg style="position:absolute;left:847.0px;top:219.5px;" width="12" height="11" viewBox="0 0 12 11"><path d="M3,4.5 L6.5,2.5 L9.5,4 V7 L6,9 L2.5,7.5 Z" fill="#f0f0f0" stroke="#222" stroke-width="0.8"/><path d="M2.5,6 L6,8 L9.5,6" stroke="#666" stroke-width="0.6" fill="none"/></svg>
<svg style="position:absolute;left:847.0px;top:233.7px;" width="12" height="11" viewBox="0 0 12 11"><path d="M4.5,2 Q6.5,4.5 6.5,7 A2.3,2.3 0 0 1 2,7 Q2,4.5 4.5,2 Z" fill="#1a1a1a"/><path d="M7.5,2.5 Q10,5 10,7 A2.5,2.5 0 0 1 5.5,7.5 Q6,5 7.5,2.5 Z" fill="#f4f4f4" stroke="#333" stroke-width="0.5"/></svg>
<div style="left:843px;top:248px;width:21px;height:1px;background:#5e5e60"></div>
<div style="left:843px;top:249px;width:21px;height:1px;background:#8a8a8c"></div>
<svg style="position:absolute;left:847.0px;top:249.4px;" width="12" height="11" viewBox="0 0 12 11"><path d="M3.5,2 L9,5 L6.5,9.5 L1.5,6.5 Z" fill="#eee" stroke="#222" stroke-width="0.8"/><path d="M3.5,1.8 Q7,0 10.5,3.5 L9,5" stroke="#222" stroke-width="1.2" fill="none"/><path d="M1.5,6.5 L1,9" stroke="#222" stroke-width="1.2"/></svg>
<svg style="position:absolute;left:847.0px;top:261.8px;" width="12" height="11" viewBox="0 0 12 11"><rect x="1.5" y="1" width="9" height="9" fill="url(#gr1)" stroke="#333" stroke-width="0.6"/><defs><linearGradient id="gr1" x1="0" y1="0" x2="1" y2="1"><stop offset="0" stop-color="#fff"/><stop offset="1" stop-color="#000"/></linearGradient></defs></svg>
<svg style="position:absolute;left:847.0px;top:275.5px;" width="12" height="11" viewBox="0 0 12 11"><path d="M1.5,10 L10.5,1" stroke="#111" stroke-width="1.2"/></svg>
<svg style="position:absolute;left:847.0px;top:287.9px;" width="12" height="11" viewBox="0 0 12 11"><rect x="1.5" y="1" width="9" height="9" fill="#aaa" stroke="#333" stroke-width="0.8"/><path d="M1.5,4 H10.5 M5,4 V10 M7.5,4 V10" stroke="#333" stroke-width="0.7"/><rect x="5.5" y="5" width="2" height="4" fill="#eee"/></svg>
<svg style="position:absolute;left:847.0px;top:300.3px;" width="12" height="11" viewBox="0 0 12 11"><path d="M2,1 L2,10 L11,10 Z" fill="#5ab4f0" stroke="#1a4a7a" stroke-width="0.8"/><path d="M4,6 L4,8 L6,8 Z" fill="#7a7b7e"/></svg>
<svg style="position:absolute;left:847.0px;top:313.4px;" width="12" height="12" viewBox="0 0 12 12"><text x="6" y="10.5" text-anchor="middle" font-family="Liberation Serif" font-size="13" fill="#111">A</text></svg>
<svg style="position:absolute;left:847.0px;top:326.3px;" width="12" height="11" viewBox="0 0 12 11"><ellipse cx="6" cy="5.5" rx="5" ry="4" fill="#f4f4f4" stroke="#666" stroke-width="0.7"/><path d="M3,9 L2,10.5 L5,9.3" fill="#f4f4f4"/></svg>
<svg style="position:absolute;left:847.0px;top:340.0px;" width="12" height="11" viewBox="0 0 12 11"><path d="M1,1.5 H7 M1,1.5 V6" stroke="#222" stroke-width="1"/><path d="M4,4 L4,10.5 L6,8.5 L8,11 L9,10.2 L7.2,7.8 L10,7.5 Z" fill="#f0f0f0" stroke="#222" stroke-width="0.7"/></svg>
<div style="left:845px;top:354px;width:11px;height:10px;background:#838385;border:1px solid #5e5e60"></div>
<div style="left:852px;top:360px;width:11px;height:11px;background:#000;border:1px solid #5ab0e0;box-shadow:0 0 0 1px #333 inset"></div>
<svg style="position:absolute;left:845px;top:371px;" width="18" height="5" viewBox="0 0 18 5"><rect width="18" height="5" fill="#fff"/><g fill="#8a8a8a"><rect x="2.5" y="0.0" width="2.5" height="2.5"/><rect x="7.5" y="0.0" width="2.5" height="2.5"/><rect x="12.5" y="0.0" width="2.5" height="2.5"/><rect x="17.5" y="0.0" width="2.5" height="2.5"/><rect x="0.0" y="2.5" width="2.5" height="2.5"/><rect x="5.0" y="2.5" width="2.5" height="2.5"/><rect x="10.0" y="2.5" width="2.5" height="2.5"/><rect x="15.0" y="2.5" width="2.5" height="2.5"/><rect x="2.5" y="5.0" width="2.5" height="2.5"/><rect x="7.5" y="5.0" width="2.5" height="2.5"/><rect x="12.5" y="5.0" width="2.5" height="2.5"/><rect x="17.5" y="5.0" width="2.5" height="2.5"/></g></svg>
<div style="left:754px;top:344px;width:88px;height:9px;background:#4c4c4e"></div>
<svg style="position:absolute;left:755px;top:345px;" width="7" height="7" viewBox="0 0 7 7"><rect x="0.5" y="0.5" width="6" height="6" fill="#555" stroke="#666" stroke-width="0.5"/><path d="M2,1.5 V5.5 M4,1.5 V5.5 M4,1.5 H5.5 V5.5 H4" stroke="#999" stroke-width="0.7" fill="none"/></svg>
<div style="left:764px;top:344px;width:75px;height:9px;background:#77787b"></div>
<svg style="position:absolute;left:765px;top:344px;" width="12" height="9" viewBox="0 0 12 9"><path d="M2.5,0 V9" stroke="#111" stroke-width="1"/><circle cx="2.5" cy="3.5" r="1.5" fill="#ddd" stroke="#111" stroke-width="0.6"/><circle cx="8" cy="4.5" r="2" fill="#222"/><circle cx="8" cy="4.5" r="0.8" fill="#aaa"/></svg>
<div class="t" id="t32" style="left:778px;top:345px;font-size:7.5px;color:#eee;transform:scaleX(0.599);">ツールプロパティ[選択ペン]</div>
<div style="left:754px;top:353px;width:88px;height:189px;background:#7a7b7e"></div>
<div style="left:754px;top:355px;width:88px;height:19px;background:linear-gradient(to right,#bdbdbd 0,#bdbdbd 44px,#7c7c7f 44px)"></div>
<svg style="position:absolute;left:754px;top:355px;" width="88" height="19" viewBox="0 0 88 19"><path d="M6.5,13.5 C14,7 24,5 34,5.5 C46,6 52,12 62,11.5 C72,11 78,6 83.5,3.5" fill="none" stroke="#000" stroke-width="8.5" stroke-linecap="round"/></svg>
<div style="left:754.5px;top:355px;width:24px;height:7px;background:rgba(70,70,70,.75)"></div>
<div class="t" id="t33" style="left:755px;top:355.5px;font-size:6.5px;color:#f4f4f4;transform:scaleX(0.786);">選択ペン</div>
<svg style="position:absolute;left:754px;top:355px;" width="88" height="19" viewBox="0 0 88 19"><circle cx="81.5" cy="14" r="2.3" fill="none" stroke="#222" stroke-width="1"/><path d="M83,15.5 L85.5,18" stroke="#222" stroke-width="1.2"/></svg>
<div style="left:754px;top:374px;width:88px;height:1px;background:#555"></div>
<div style="left:756px;top:376px;width:80px;height:13px;background:#7d7e81;border-bottom:1px solid #6a6a6c"></div>
<div class="t" id="t34" style="left:762px;top:379px;font-size:6.5px;color:#cfcfcf;transform:scaleX(0.500);">作成方法</div>
<div style="left:778px;top:377px;width:11px;height:11px;background:linear-gradient(#3a8ae8,#1a5ab8);border:1px solid #2a3a5a"></div>
<div style="left:790px;top:376px;width:13px;height:13px;background:#8ea6b6;border:1px solid #6a8090"></div>
<svg style="position:absolute;left:791px;top:377px;" width="11" height="11" viewBox="0 0 11 11"><rect x="1" y="1" width="5" height="5" fill="#1a6ad0"/><rect x="4" y="4" width="6" height="6" fill="#1a6ad0" stroke="#0a2a5a" stroke-width="0.6"/></svg>
<svg style="position:absolute;left:804px;top:377px;" width="11" height="11" viewBox="0 0 11 11"><rect x="1" y="1" width="6" height="6" fill="#1a6ad0"/><rect x="4.5" y="4.5" width="6" height="6" fill="#fff" stroke="#222" stroke-width="0.6"/></svg>
<svg style="position:absolute;left:816px;top:377px;" width="11" height="11" viewBox="0 0 11 11"><rect x="1" y="1" width="8" height="8" fill="#fff" stroke="#222" stroke-width="0.6"/><rect x="3" y="3" width="6" height="6" fill="#1a6ad0"/></svg>
<svg style="position:absolute;left:828px;top:380px;" width="6" height="4" viewBox="0 0 6 4"><path d="M0,0 H6 L3,4 Z" fill="#333"/></svg>
<div style="left:756px;top:391px;width:80px;height:1px;background:#6a6a6c"></div>
<svg style="position:absolute;left:757px;top:396px;" width="6" height="6" viewBox="0 0 6 6"><circle cx="3" cy="3" r="2.5" fill="#9a9a9a" stroke="#666" stroke-width="0.5"/><path d="M1.5,3 H4.5 M3,1.5 V4.5" stroke="#333" stroke-width="0.7"/></svg>
<div class="t" id="t35" style="left:763px;top:393px;font-size:7.5px;color:#efefef;transform:scaleX(0.583);">ブラシサイズ</div>
<div style="left:773px;top:401px;width:26px;height:4px;background:linear-gradient(to right,#ddd,#aaa);border:1px solid #666"></div>
<div class="t" id="t36" style="left:807px;top:398px;font-size:7px;color:#f0f0f0;transform:scaleX(0.742);">250.0</div>
<svg style="position:absolute;left:821px;top:396px;" width="6" height="9" viewBox="0 0 6 9"><path d="M0.5,3.5 L3,0.5 L5.5,3.5 Z M0.5,5.5 L3,8.5 L5.5,5.5 Z" fill="#222"/></svg>
<div style="left:828px;top:395px;width:7px;height:11px;background:#86878a;border:1px solid #666"></div>
<svg style="position:absolute;left:828px;top:397px;" width="7" height="7" viewBox="0 0 7 7"><circle cx="3.5" cy="3.5" r="2" fill="none" stroke="#222" stroke-width="0.9"/></svg>
<div style="left:756px;top:408px;width:80px;height:1px;background:#6a6a6c"></div>
<div class="t" id="t37" style="left:762px;top:413px;font-size:6.5px;color:#cfcfcf;transform:scaleX(0.571);">アンチ</div>
<div style="left:776px;top:410px;width:60px;height:13px;background:#76777a;border:1px solid #666"></div>
<svg style="position:absolute;left:777px;top:410px;" width="40" height="12" viewBox="0 0 40 12"><circle cx="6.5" cy="6" r="3.6" fill="#1e1e1e"/><circle cx="19.5" cy="6" r="4.4" fill="#e8e8e8"/><circle cx="19.5" cy="6" r="2.2" fill="#111"/><circle cx="32.5" cy="6" r="4.5" fill="#c8c8c8"/><circle cx="32.5" cy="6" r="3.3" fill="#555"/><circle cx="32.5" cy="6" r="2" fill="#1a1a1a"/></svg>
<div style="left:818px;top:410px;width:12px;height:13px;background:#8ea6b6;border:1px solid #6a8090"></div>
<svg style="position:absolute;left:818px;top:410px;" width="12" height="12" viewBox="0 0 12 12"><circle cx="6" cy="6" r="4.2" fill="#bbb"/><circle cx="6" cy="6" r="3" fill="#555"/><circle cx="6" cy="6" r="1.8" fill="#222"/></svg>
<svg style="position:absolute;left:830px;top:414px;" width="6" height="4" viewBox="0 0 6 4"><path d="M0,0 H6 L3,4 Z" fill="#333"/></svg>
<div style="left:756px;top:426px;width:80px;height:1px;background:#6a6a6c"></div>
<div class="t" id="t38" style="left:762px;top:430px;font-size:7px;color:#e0e0e0;transform:scaleX(0.714);">硬さ</div>
<div style="left:773px;top:429px;width:10px;height:9px;background:#a4a4a4;border:1px solid #666"></div>
<div style="left:784px;top:429px;width:10px;height:9px;background:#b0b0b0;border:1px solid #666"></div>
<div style="left:795px;top:429px;width:10px;height:9px;background:#bcbcbc;border:1px solid #666"></div>
<div style="left:806px;top:429px;width:10px;height:9px;background:#c8c8c8;border:1px solid #666"></div>
<div style="left:817px;top:429px;width:10px;height:9px;background:#d4d4d4;border:1px solid #666"></div>
<div style="left:828px;top:429px;width:7px;height:9px;background:#86878a;border:1px solid #666"></div>
<svg style="position:absolute;left:829px;top:431px;" width="5" height="5" viewBox="0 0 5 5"><path d="M1,0 L4,2.5 L1,5 Z" fill="#222"/></svg>
<div style="left:756px;top:441px;width:80px;height:1px;background:#6a6a6c"></div>
<div class="t" id="t39" style="left:763px;top:444px;font-size:7.5px;color:#efefef;transform:scaleX(0.650);">ブラシ濃度</div>
<div style="left:773px;top:452px;width:26px;height:4px;background:linear-gradient(to right,#ccc,#eee);border:1px solid #666"></div>
<div class="t" id="t40" style="left:811px;top:449px;font-size:7px;color:#f0f0f0;transform:scaleX(0.770);">100</div>
<svg style="position:absolute;left:821px;top:447px;" width="6" height="9" viewBox="0 0 6 9"><path d="M0.5,3.5 L3,0.5 L5.5,3.5 Z M0.5,5.5 L3,8.5 L5.5,5.5 Z" fill="#222"/></svg>
<div style="left:828px;top:445px;width:7px;height:11px;background:#86878a;border:1px solid #666"></div>
<svg style="position:absolute;left:828px;top:447px;" width="7" height="7" viewBox="0 0 7 7"><circle cx="3.5" cy="3.5" r="2" fill="none" stroke="#222" stroke-width="0.9"/></svg>
<div style="left:756px;top:459px;width:80px;height:1px;background:#6a6a6c"></div>
<div class="t" id="t41" style="left:763px;top:462px;font-size:7.5px;color:#efefef;transform:scaleX(0.650);">手ブレ補正</div>
<div style="left:773px;top:470px;width:26px;height:3px;background:#6a6a6c;border-bottom:1px solid #444"></div>
<div style="left:773px;top:469px;width:6px;height:4px;background:#ddd;border:1px solid #666"></div>
<div class="t" id="t42" style="left:817px;top:465px;font-size:7px;color:#f0f0f0;transform:scaleX(1.024);">2</div>
<svg style="position:absolute;left:821px;top:463px;" width="6" height="9" viewBox="0 0 6 9"><path d="M0.5,3.5 L3,0.5 L5.5,3.5 Z M0.5,5.5 L3,8.5 L5.5,5.5 Z" fill="#222"/></svg>
<div style="left:836px;top:375px;width:6px;height:157px;background:#6c6d70"></div>
<div style="left:754px;top:532px;width:88px;height:11px;background:#747578;border-top:1px solid #666"></div>
<svg style="position:absolute;left:822px;top:533px;" width="20" height="9" viewBox="0 0 20 9"><circle cx="4.5" cy="4.5" r="3" fill="none" stroke="#333" stroke-width="0.9" stroke-dasharray="1.2 0.8"/><path d="M13,1 L14.5,4 L16,1 M14.5,4 V8.5" stroke="#222" stroke-width="1" fill="none"/><path d="M12,2 Q14.5,-0.5 17,2" stroke="#eee" stroke-width="0.8" fill="none"/></svg>
<div style="left:866px;top:38px;width:87px;height:11px;background:#4c4c4e"></div>
<svg style="position:absolute;left:866px;top:40px;" width="7" height="7" viewBox="0 0 7 7"><rect x="0.5" y="0.5" width="6" height="6" fill="#555" stroke="#666" stroke-width="0.5"/><path d="M2,1.5 V5.5 M4,1.5 V5.5 M4,1.5 H5.5 V5.5 H4" stroke="#999" stroke-width="0.7" fill="none"/></svg>
<div style="left:875px;top:39px;width:41px;height:10px;background:#77787b"></div>
<svg style="position:absolute;left:876px;top:40px;" width="9" height="8" viewBox="0 0 9 8"><rect x="0.5" y="0.5" width="7" height="5" rx="1" fill="#e33" stroke="#fff" stroke-width="0.7"/><rect x="3" y="4" width="5" height="3.5" fill="#ddd" stroke="#666" stroke-width="0.5"/></svg>
<div class="t" id="t43" style="left:887px;top:41px;font-size:7.5px;color:#eee;transform:scaleX(0.583);">ナビゲーター</div>
<div style="left:866px;top:49px;width:87px;height:1px;background:#5a5a5a"></div>
<div style="left:866px;top:50px;width:87px;height:28px;background:#4a4a4a"></div>
<div style="left:887px;top:50px;width:44px;height:28px;border-left:1.5px solid #c22;border-right:1.5px solid #c22"></div>
<div style="left:889px;top:50px;width:38px;height:28px;background:#fff"></div>
<div style="left:899.5px;top:54px;width:18px;height:18px;border-radius:50%;background:#000"></div>
<div style="left:866px;top:78px;width:87px;height:23px;background:#7a7b7e"></div>
<svg style="position:absolute;left:867px;top:81px;" width="32" height="7" viewBox="0 0 32 7"><rect x="0" y="0" width="32" height="7" fill="#5a5a5c"/><rect x="0.5" y="0.5" width="16" height="6" fill="#909092"/><path d="M16,7 L32,0 V7 Z" fill="#3a3a3a"/><path d="M16,0 H32 L16,7 Z" fill="#7a7a7c"/></svg>
<svg style="position:absolute;left:867px;top:91px;" width="32" height="7" viewBox="0 0 32 7"><rect x="0" y="0" width="32" height="7" fill="#5a5a5c"/><rect x="0.5" y="0.5" width="16" height="6" fill="#909092"/><path d="M17,7 L21,1 H26 L32,7 Z" fill="#3a3a3a"/></svg>
<div style="left:883px;top:79px;width:1px;height:21px;background:#9a9a9c"></div>
<div class="t" id="t44" style="left:868px;top:82px;font-size:6px;color:#fff;transform:scaleX(0.941);">78.9</div>
<div class="t" id="t45" style="left:868px;top:92px;font-size:6px;color:#fff;transform:scaleX(1.079);">0.0</div>
<svg style="position:absolute;left:901px;top:80px;" width="52" height="20" viewBox="0 0 52 20"><circle cx="4" cy="3.5" r="2.8" fill="#ddd" stroke="#222" stroke-width="0.9"/><path d="M6,5.5 L8,7.5" stroke="#111" stroke-width="1.4"/><path d="M2.5,3.5 H5.5" stroke="#222" stroke-width="0.7"/><circle cx="14" cy="3.5" r="2.8" fill="#ddd" stroke="#222" stroke-width="0.9"/><path d="M16,5.5 L18,7.5" stroke="#111" stroke-width="1.4"/><path d="M12.5,3.5 H15.5 M14,2 V5" stroke="#222" stroke-width="0.7"/><rect x="20.5" y="0" width="8" height="8" fill="#111"/><rect x="22.5" y="2" width="4" height="4" fill="#444" stroke="#999" stroke-width="0.6"/><rect x="32" y="0.5" width="8" height="7" fill="#eee" stroke="#333" stroke-width="0.6"/><path d="M32,0.5 H40 V2 H32 Z" fill="#222"/><path d="M34,3 L39,7" stroke="#222" stroke-width="1.3"/><rect x="42.5" y="0.5" width="8" height="7" fill="#eee" stroke="#333" stroke-width="0.6"/><path d="M42.5,0.5 H50.5 V2 H42.5 Z" fill="#222"/><path d="M44,2.5 L49.5,7" stroke="#222" stroke-width="1.3"/><path d="M2,18 V14.5 A2.5,2.5 0 0 1 7,14.5 V16" stroke="#111" stroke-width="1.6" fill="none"/><path d="M0.5,16 L2,18.5 L3.5,16 Z" fill="#111"/><path d="M11.5,16 V14.5 A2.5,2.5 0 0 1 16.5,14.5 V18" stroke="#111" stroke-width="1.6" fill="none"/><path d="M15,16 L16.5,18.5 L18,16 Z" fill="#111"/><circle cx="24.5" cy="15" r="3" fill="none" stroke="#555" stroke-width="0.9" stroke-dasharray="1 1"/><path d="M33,18 V14.5 A3,3 0 0 1 39,14.5 V18" stroke="#111" stroke-width="1.5" fill="none"/><path d="M32,17 L34,18 L33,15 Z" fill="#fff"/><path d="M49,12 A3.5,3.5 0 1 0 49.5,17" stroke="#222" stroke-width="1.3" fill="none"/><rect x="47" y="16" width="3" height="3" fill="#eee"/></svg>
<div style="left:866px;top:100px;width:87px;height:1px;background:#5a5a5a"></div>
<div style="left:866px;top:101px;width:87px;height:10px;background:#4c4c4e"></div>
<svg style="position:absolute;left:866px;top:103px;" width="7" height="7" viewBox="0 0 7 7"><rect x="0.5" y="0.5" width="6" height="6" fill="#555" stroke="#666" stroke-width="0.5"/><path d="M2,1.5 V5.5 M4,1.5 V5.5 M4,1.5 H5.5 V5.5 H4" stroke="#999" stroke-width="0.7" fill="none"/></svg>
<div style="left:875px;top:102px;width:31px;height:9px;background:#77787b"></div>
<svg style="position:absolute;left:876px;top:102px;" width="9" height="9" viewBox="0 0 9 9"><circle cx="2" cy="2" r="1.8" fill="#2c2"/><circle cx="6.5" cy="2" r="1.8" fill="#24d"/><circle cx="2" cy="6.5" r="1.8" fill="#e24"/><circle cx="6.5" cy="6.5" r="1.8" fill="#fff"/></svg>
<div class="t" id="t46" style="left:887px;top:103px;font-size:7.5px;color:#eee;transform:scaleX(0.750);">中間色</div>
<div style="left:866px;top:111px;width:87px;height:102px;background:#7a7b7e"></div>
<svg style="position:absolute;left:874px;top:119px;" width="70" height="80" viewBox="0 0 70 80"><rect x="0.00" y="0.00" width="4.00" height="4.00" fill="rgb(255,255,255)"/><rect x="5.00" y="0.00" width="4.00" height="4.00" fill="rgb(255,235,235)"/><rect x="10.00" y="0.00" width="4.00" height="4.00" fill="rgb(255,215,215)"/><rect x="15.00" y="0.00" width="4.00" height="4.00" fill="rgb(254,196,196)"/><rect x="20.00" y="0.00" width="4.00" height="4.00" fill="rgb(255,176,176)"/><rect x="25.00" y="0.00" width="4.00" height="4.00" fill="rgb(255,156,156)"/><rect x="30.00" y="0.00" width="4.00" height="4.00" fill="rgb(255,137,137)"/><rect x="35.00" y="0.00" width="4.00" height="4.00" fill="rgb(255,117,117)"/><rect x="40.00" y="0.00" width="4.00" height="4.00" fill="rgb(255,98,98)"/><rect x="45.00" y="0.00" width="4.00" height="4.00" fill="rgb(255,78,78)"/><rect x="50.00" y="0.00" width="4.00" height="4.00" fill="rgb(255,58,58)"/><rect x="55.00" y="0.00" width="4.00" height="4.00" fill="rgb(255,39,39)"/><rect x="60.00" y="0.00" width="4.00" height="4.00" fill="rgb(255,19,19)"/><rect x="65.00" y="0.00" width="4.00" height="4.00" fill="rgb(255,0,0)"/><rect x="0.00" y="5.00" width="4.00" height="4.00" fill="rgb(255,255,255)"/><rect x="5.00" y="5.00" width="4.00" height="4.00" fill="rgb(253,235,235)"/><rect x="10.00" y="5.00" width="4.00" height="4.00" fill="rgb(252,215,215)"/><rect x="15.00" y="5.00" width="4.00" height="4.00" fill="rgb(251,196,196)"/><rect x="20.00" y="5.00" width="4.00" height="4.00" fill="rgb(249,176,176)"/><rect x="25.00" y="5.00" width="4.00" height="4.00" fill="rgb(248,156,156)"/><rect x="30.00" y="5.00" width="4.00" height="4.00" fill="rgb(247,137,137)"/><rect x="35.00" y="5.00" width="4.00" height="4.00" fill="rgb(245,117,117)"/><rect x="40.00" y="5.00" width="4.00" height="4.00" fill="rgb(244,98,98)"/><rect x="45.00" y="5.00" width="4.00" height="4.00" fill="rgb(243,78,78)"/><rect x="50.00" y="5.00" width="4.00" height="4.00" fill="rgb(241,58,58)"/><rect x="55.00" y="5.00" width="4.00" height="4.00" fill="rgb(240,39,39)"/><rect x="60.00" y="5.00" width="4.00" height="4.00" fill="rgb(239,19,19)"/><rect x="65.00" y="5.00" width="4.00" height="4.00" fill="rgb(238,0,0)"/><rect x="0.00" y="10.00" width="4.00" height="4.00" fill="rgb(255,255,255)"/><rect x="5.00" y="10.00" width="4.00" height="4.00" fill="rgb(252,235,235)"/><rect x="10.00" y="10.00" width="4.00" height="4.00" fill="rgb(249,215,215)"/><rect x="15.00" y="10.00" width="4.00" height="4.00" fill="rgb(247,196,196)"/><rect x="20.00" y="10.00" width="4.00" height="4.00" fill="rgb(244,176,176)"/><rect x="25.00" y="10.00" width="4.00" height="4.00" fill="rgb(241,156,156)"/><rect x="30.00" y="10.00" width="4.00" height="4.00" fill="rgb(239,137,137)"/><rect x="35.00" y="10.00" width="4.00" height="4.00" fill="rgb(236,117,117)"/><rect x="40.00" y="10.00" width="4.00" height="4.00" fill="rgb(234,98,98)"/><rect x="45.00" y="10.00" width="4.00" height="4.00" fill="rgb(231,78,78)"/><rect x="50.00" y="10.00" width="4.00" height="4.00" fill="rgb(228,58,58)"/><rect x="55.00" y="10.00" width="4.00" height="4.00" fill="rgb(226,39,39)"/><rect x="60.00" y="10.00" width="4.00" height="4.00" fill="rgb(223,19,19)"/><rect x="65.00" y="10.00" width="4.00" height="4.00" fill="rgb(221,0,0)"/><rect x="0.00" y="15.00" width="4.00" height="4.00" fill="rgb(255,255,255)"/><rect x="5.00" y="15.00" width="4.00" height="4.00" fill="rgb(251,235,235)"/><rect x="10.00" y="15.00" width="4.00" height="4.00" fill="rgb(247,215,215)"/><rect x="15.00" y="15.00" width="4.00" height="4.00" fill="rgb(243,196,196)"/><rect x="20.00" y="15.00" width="4.00" height="4.00" fill="rgb(239,176,176)"/><rect x="25.00" y="15.00" width="4.00" height="4.00" fill="rgb(235,156,156)"/><rect x="30.00" y="15.00" width="4.00" height="4.00" fill="rgb(231,137,137)"/><rect x="35.00" y="15.00" width="4.00" height="4.00" fill="rgb(227,117,117)"/><rect x="40.00" y="15.00" width="4.00" height="4.00" fill="rgb(223,98,98)"/><rect x="45.00" y="15.00" width="4.00" height="4.00" fill="rgb(219,78,78)"/><rect x="50.00" y="15.00" width="4.00" height="4.00" fill="rgb(215,58,58)"/><rect x="55.00" y="15.00" width="4.00" height="4.00" fill="rgb(211,39,39)"/><rect x="60.00" y="15.00" width="4.00" height="4.00" fill="rgb(207,19,19)"/><rect x="65.00" y="15.00" width="4.00" height="4.00" fill="rgb(204,0,0)"/><rect x="0.00" y="20.00" width="4.00" height="4.00" fill="rgb(255,255,255)"/><rect x="5.00" y="20.00" width="4.00" height="4.00" fill="rgb(249,235,235)"/><rect x="10.00" y="20.00" width="4.00" height="4.00" fill="rgb(244,215,215)"/><rect x="15.00" y="20.00" width="4.00" height="4.00" fill="rgb(239,196,196)"/><rect x="20.00" y="20.00" width="4.00" height="4.00" fill="rgb(234,176,176)"/><rect x="25.00" y="20.00" width="4.00" height="4.00" fill="rgb(228,156,156)"/><rect x="30.00" y="20.00" width="4.00" height="4.00" fill="rgb(223,137,137)"/><rect x="35.00" y="20.00" width="4.00" height="4.00" fill="rgb(218,117,117)"/><rect x="40.00" y="20.00" width="4.00" height="4.00" fill="rgb(213,98,98)"/><rect x="45.00" y="20.00" width="4.00" height="4.00" fill="rgb(207,78,78)"/><rect x="50.00" y="20.00" width="4.00" height="4.00" fill="rgb(202,58,58)"/><rect x="55.00" y="20.00" width="4.00" height="4.00" fill="rgb(197,39,39)"/><rect x="60.00" y="20.00" width="4.00" height="4.00" fill="rgb(192,19,19)"/><rect x="65.00" y="20.00" width="4.00" height="4.00" fill="rgb(187,0,0)"/><rect x="0.00" y="25.00" width="4.00" height="4.00" fill="rgb(255,255,255)"/><rect x="5.00" y="25.00" width="4.00" height="4.00" fill="rgb(248,235,235)"/><rect x="10.00" y="25.00" width="4.00" height="4.00" fill="rgb(241,215,215)"/><rect x="15.00" y="25.00" width="4.00" height="4.00" fill="rgb(235,196,196)"/><rect x="20.00" y="25.00" width="4.00" height="4.00" fill="rgb(228,176,176)"/><rect x="25.00" y="25.00" width="4.00" height="4.00" fill="rgb(222,156,156)"/><rect x="30.00" y="25.00" width="4.00" height="4.00" fill="rgb(215,137,137)"/><rect x="35.00" y="25.00" width="4.00" height="4.00" fill="rgb(209,117,117)"/><rect x="40.00" y="25.00" width="4.00" height="4.00" fill="rgb(202,98,98)"/><rect x="45.00" y="25.00" width="4.00" height="4.00" fill="rgb(196,78,78)"/><rect x="50.00" y="25.00" width="4.00" height="4.00" fill="rgb(189,58,58)"/><rect x="55.00" y="25.00" width="4.00" height="4.00" fill="rgb(183,39,39)"/><rect x="60.00" y="25.00" width="4.00" height="4.00" fill="rgb(176,19,19)"/><rect x="65.00" y="25.00" width="4.00" height="4.00" fill="rgb(170,0,0)"/><rect x="0.00" y="30.00" width="4.00" height="4.00" fill="rgb(255,255,255)"/><rect x="5.00" y="30.00" width="4.00" height="4.00" fill="rgb(247,235,235)"/><rect x="10.00" y="30.00" width="4.00" height="4.00" fill="rgb(239,215,215)"/><rect x="15.00" y="30.00" width="4.00" height="4.00" fill="rgb(231,196,196)"/><rect x="20.00" y="30.00" width="4.00" height="4.00" fill="rgb(223,176,176)"/><rect x="25.00" y="30.00" width="4.00" height="4.00" fill="rgb(215,156,156)"/><rect x="30.00" y="30.00" width="4.00" height="4.00" fill="rgb(207,137,137)"/><rect x="35.00" y="30.00" width="4.00" height="4.00" fill="rgb(200,117,117)"/><rect x="40.00" y="30.00" width="4.00" height="4.00" fill="rgb(192,98,98)"/><rect x="45.00" y="30.00" width="4.00" height="4.00" fill="rgb(184,78,78)"/><rect x="50.00" y="30.00" width="4.00" height="4.00" fill="rgb(176,58,58)"/><rect x="55.00" y="30.00" width="4.00" height="4.00" fill="rgb(168,39,39)"/><rect x="60.00" y="30.00" width="4.00" height="4.00" fill="rgb(160,19,19)"/><rect x="65.00" y="30.00" width="4.00" height="4.00" fill="rgb(153,0,0)"/><rect x="0.00" y="35.00" width="4.00" height="4.00" fill="rgb(255,255,255)"/><rect x="5.00" y="35.00" width="4.00" height="4.00" fill="rgb(245,235,235)"/><rect x="10.00" y="35.00" width="4.00" height="4.00" fill="rgb(236,215,215)"/><rect x="15.00" y="35.00" width="4.00" height="4.00" fill="rgb(227,196,196)"/><rect x="20.00" y="35.00" width="4.00" height="4.00" fill="rgb(218,176,176)"/><rect x="25.00" y="35.00" width="4.00" height="4.00" fill="rgb(209,156,156)"/><rect x="30.00" y="35.00" width="4.00" height="4.00" fill="rgb(200,137,137)"/><rect x="35.00" y="35.00" width="4.00" height="4.00" fill="rgb(190,117,117)"/><rect x="40.00" y="35.00" width="4.00" height="4.00" fill="rgb(181,98,98)"/><rect x="45.00" y="35.00" width="4.00" height="4.00" fill="rgb(172,78,78)"/><rect x="50.00" y="35.00" width="4.00" height="4.00" fill="rgb(163,58,58)"/><rect x="55.00" y="35.00" width="4.00" height="4.00" fill="rgb(154,39,39)"/><rect x="60.00" y="35.00" width="4.00" height="4.00" fill="rgb(145,19,19)"/><rect x="65.00" y="35.00" width="4.00" height="4.00" fill="rgb(136,0,0)"/><rect x="0.00" y="40.00" width="4.00" height="4.00" fill="rgb(255,255,255)"/><rect x="5.00" y="40.00" width="4.00" height="4.00" fill="rgb(244,235,235)"/><rect x="10.00" y="40.00" width="4.00" height="4.00" fill="rgb(234,215,215)"/><rect x="15.00" y="40.00" width="4.00" height="4.00" fill="rgb(223,196,196)"/><rect x="20.00" y="40.00" width="4.00" height="4.00" fill="rgb(213,176,176)"/><rect x="25.00" y="40.00" width="4.00" height="4.00" fill="rgb(202,156,156)"/><rect x="30.00" y="40.00" width="4.00" height="4.00" fill="rgb(192,137,137)"/><rect x="35.00" y="40.00" width="4.00" height="4.00" fill="rgb(181,117,117)"/><rect x="40.00" y="40.00" width="4.00" height="4.00" fill="rgb(171,98,98)"/><rect x="45.00" y="40.00" width="4.00" height="4.00" fill="rgb(160,78,78)"/><rect x="50.00" y="40.00" width="4.00" height="4.00" fill="rgb(150,58,58)"/><rect x="55.00" y="40.00" width="4.00" height="4.00" fill="rgb(139,39,39)"/><rect x="60.00" y="40.00" width="4.00" height="4.00" fill="rgb(129,19,19)"/><rect x="65.00" y="40.00" width="4.00" height="4.00" fill="rgb(119,0,0)"/><rect x="0.00" y="45.00" width="4.00" height="4.00" fill="rgb(255,255,255)"/><rect x="5.00" y="45.00" width="4.00" height="4.00" fill="rgb(243,235,235)"/><rect x="10.00" y="45.00" width="4.00" height="4.00" fill="rgb(231,215,215)"/><rect x="15.00" y="45.00" width="4.00" height="4.00" fill="rgb(219,196,196)"/><rect x="20.00" y="45.00" width="4.00" height="4.00" fill="rgb(207,176,176)"/><rect x="25.00" y="45.00" width="4.00" height="4.00" fill="rgb(196,156,156)"/><rect x="30.00" y="45.00" width="4.00" height="4.00" fill="rgb(184,137,137)"/><rect x="35.00" y="45.00" width="4.00" height="4.00" fill="rgb(172,117,117)"/><rect x="40.00" y="45.00" width="4.00" height="4.00" fill="rgb(160,98,98)"/><rect x="45.00" y="45.00" width="4.00" height="4.00" fill="rgb(149,78,78)"/><rect x="50.00" y="45.00" width="4.00" height="4.00" fill="rgb(137,58,58)"/><rect x="55.00" y="45.00" width="4.00" height="4.00" fill="rgb(125,39,39)"/><rect x="60.00" y="45.00" width="4.00" height="4.00" fill="rgb(113,19,19)"/><rect x="65.00" y="45.00" width="4.00" height="4.00" fill="rgb(102,0,0)"/><rect x="0.00" y="50.00" width="4.00" height="4.00" fill="rgb(255,255,255)"/><rect x="5.00" y="50.00" width="4.00" height="4.00" fill="rgb(241,235,235)"/><rect x="10.00" y="50.00" width="4.00" height="4.00" fill="rgb(228,215,215)"/><rect x="15.00" y="50.00" width="4.00" height="4.00" fill="rgb(215,196,196)"/><rect x="20.00" y="50.00" width="4.00" height="4.00" fill="rgb(202,176,176)"/><rect x="25.00" y="50.00" width="4.00" height="4.00" fill="rgb(189,156,156)"/><rect x="30.00" y="50.00" width="4.00" height="4.00" fill="rgb(176,137,137)"/><rect x="35.00" y="50.00" width="4.00" height="4.00" fill="rgb(163,117,117)"/><rect x="40.00" y="50.00" width="4.00" height="4.00" fill="rgb(150,98,98)"/><rect x="45.00" y="50.00" width="4.00" height="4.00" fill="rgb(137,78,78)"/><rect x="50.00" y="50.00" width="4.00" height="4.00" fill="rgb(124,58,58)"/><rect x="55.00" y="50.00" width="4.00" height="4.00" fill="rgb(111,39,39)"/><rect x="60.00" y="50.00" width="4.00" height="4.00" fill="rgb(98,19,19)"/><rect x="65.00" y="50.00" width="4.00" height="4.00" fill="rgb(85,0,0)"/><rect x="0.00" y="55.00" width="4.00" height="4.00" fill="rgb(255,255,255)"/><rect x="5.00" y="55.00" width="4.00" height="4.00" fill="rgb(240,235,235)"/><rect x="10.00" y="55.00" width="4.00" height="4.00" fill="rgb(226,215,215)"/><rect x="15.00" y="55.00" width="4.00" height="4.00" fill="rgb(211,196,196)"/><rect x="20.00" y="55.00" width="4.00" height="4.00" fill="rgb(197,176,176)"/><rect x="25.00" y="55.00" width="4.00" height="4.00" fill="rgb(183,156,156)"/><rect x="30.00" y="55.00" width="4.00" height="4.00" fill="rgb(168,137,137)"/><rect x="35.00" y="55.00" width="4.00" height="4.00" fill="rgb(154,117,117)"/><rect x="40.00" y="55.00" width="4.00" height="4.00" fill="rgb(139,98,98)"/><rect x="45.00" y="55.00" width="4.00" height="4.00" fill="rgb(125,78,78)"/><rect x="50.00" y="55.00" width="4.00" height="4.00" fill="rgb(111,58,58)"/><rect x="55.00" y="55.00" width="4.00" height="4.00" fill="rgb(96,39,39)"/><rect x="60.00" y="55.00" width="4.00" height="4.00" fill="rgb(82,19,19)"/><rect x="65.00" y="55.00" width="4.00" height="4.00" fill="rgb(68,0,0)"/><rect x="0.00" y="60.00" width="4.00" height="4.00" fill="rgb(255,255,255)"/><rect x="5.00" y="60.00" width="4.00" height="4.00" fill="rgb(239,235,235)"/><rect x="10.00" y="60.00" width="4.00" height="4.00" fill="rgb(223,215,215)"/><rect x="15.00" y="60.00" width="4.00" height="4.00" fill="rgb(207,196,196)"/><rect x="20.00" y="60.00" width="4.00" height="4.00" fill="rgb(192,176,176)"/><rect x="25.00" y="60.00" width="4.00" height="4.00" fill="rgb(176,156,156)"/><rect x="30.00" y="60.00" width="4.00" height="4.00" fill="rgb(160,137,137)"/><rect x="35.00" y="60.00" width="4.00" height="4.00" fill="rgb(145,117,117)"/><rect x="40.00" y="60.00" width="4.00" height="4.00" fill="rgb(129,98,98)"/><rect x="45.00" y="60.00" width="4.00" height="4.00" fill="rgb(113,78,78)"/><rect x="50.00" y="60.00" width="4.00" height="4.00" fill="rgb(98,58,58)"/><rect x="55.00" y="60.00" width="4.00" height="4.00" fill="rgb(82,39,39)"/><rect x="60.00" y="60.00" width="4.00" height="4.00" fill="rgb(66,19,19)"/><rect x="65.00" y="60.00" width="4.00" height="4.00" fill="rgb(50,0,0)"/><rect x="0.00" y="65.00" width="4.00" height="4.00" fill="rgb(255,255,255)"/><rect x="5.00" y="65.00" width="4.00" height="4.00" fill="rgb(238,235,235)"/><rect x="10.00" y="65.00" width="4.00" height="4.00" fill="rgb(221,215,215)"/><rect x="15.00" y="65.00" width="4.00" height="4.00" fill="rgb(204,196,196)"/><rect x="20.00" y="65.00" width="4.00" height="4.00" fill="rgb(187,176,176)"/><rect x="25.00" y="65.00" width="4.00" height="4.00" fill="rgb(170,156,156)"/><rect x="30.00" y="65.00" width="4.00" height="4.00" fill="rgb(152,137,137)"/><rect x="35.00" y="65.00" width="4.00" height="4.00" fill="rgb(136,117,117)"/><rect x="40.00" y="65.00" width="4.00" height="4.00" fill="rgb(119,98,98)"/><rect x="45.00" y="65.00" width="4.00" height="4.00" fill="rgb(102,78,78)"/><rect x="50.00" y="65.00" width="4.00" height="4.00" fill="rgb(84,58,58)"/><rect x="55.00" y="65.00" width="4.00" height="4.00" fill="rgb(68,39,39)"/><rect x="60.00" y="65.00" width="4.00" height="4.00" fill="rgb(50,19,19)"/><rect x="65.00" y="65.00" width="4.00" height="4.00" fill="rgb(33,0,0)"/><rect x="0.00" y="70.00" width="4.00" height="4.00" fill="rgb(255,255,255)"/><rect x="5.00" y="70.00" width="4.00" height="4.00" fill="rgb(236,235,235)"/><rect x="10.00" y="70.00" width="4.00" height="4.00" fill="rgb(218,215,215)"/><rect x="15.00" y="70.00" width="4.00" height="4.00" fill="rgb(200,196,196)"/><rect x="20.00" y="70.00" width="4.00" height="4.00" fill="rgb(181,176,176)"/><rect x="25.00" y="70.00" width="4.00" height="4.00" fill="rgb(163,156,156)"/><rect x="30.00" y="70.00" width="4.00" height="4.00" fill="rgb(145,137,137)"/><rect x="35.00" y="70.00" width="4.00" height="4.00" fill="rgb(126,117,117)"/><rect x="40.00" y="70.00" width="4.00" height="4.00" fill="rgb(108,98,98)"/><rect x="45.00" y="70.00" width="4.00" height="4.00" fill="rgb(90,78,78)"/><rect x="50.00" y="70.00" width="4.00" height="4.00" fill="rgb(71,58,58)"/><rect x="55.00" y="70.00" width="4.00" height="4.00" fill="rgb(53,39,39)"/><rect x="60.00" y="70.00" width="4.00" height="4.00" fill="rgb(35,19,19)"/><rect x="65.00" y="70.00" width="4.00" height="4.00" fill="rgb(16,0,0)"/><rect x="0.00" y="75.00" width="4.00" height="4.00" fill="rgb(255,255,255)"/><rect x="5.00" y="75.00" width="4.00" height="4.00" fill="rgb(235,235,235)"/><rect x="10.00" y="75.00" width="4.00" height="4.00" fill="rgb(215,215,215)"/><rect x="15.00" y="75.00" width="4.00" height="4.00" fill="rgb(196,196,196)"/><rect x="20.00" y="75.00" width="4.00" height="4.00" fill="rgb(176,176,176)"/><rect x="25.00" y="75.00" width="4.00" height="4.00" fill="rgb(156,156,156)"/><rect x="30.00" y="75.00" width="4.00" height="4.00" fill="rgb(137,137,137)"/><rect x="35.00" y="75.00" width="4.00" height="4.00" fill="rgb(117,117,117)"/><rect x="40.00" y="75.00" width="4.00" height="4.00" fill="rgb(98,98,98)"/><rect x="45.00" y="75.00" width="4.00" height="4.00" fill="rgb(78,78,78)"/><rect x="50.00" y="75.00" width="4.00" height="4.00" fill="rgb(58,58,58)"/><rect x="55.00" y="75.00" width="4.00" height="4.00" fill="rgb(39,39,39)"/><rect x="60.00" y="75.00" width="4.00" height="4.00" fill="rgb(19,19,19)"/><rect x="65.00" y="75.00" width="4.00" height="4.00" fill="rgb(0,0,0)"/></svg>
<div style="left:867px;top:114px;width:10px;height:10px;background:#fff;box-shadow:1px 1px 0 #666"></div>
<div style="left:941px;top:113px;width:10px;height:10px;background:#f00;box-shadow:1px 1px 0 #666"></div>
<div style="left:867px;top:194px;width:10px;height:10px;background:#fff;box-shadow:1px 1px 0 #666"></div>
<div style="left:941px;top:194px;width:10px;height:10px;background:#000;box-shadow:1px 1px 0 #666"></div>
<div style="left:867px;top:206px;width:5px;height:5px;background:#b00;border:1px solid #400"></div>
<div style="left:883px;top:206px;width:5px;height:5px;background:#0a0;border:1px solid #040"></div>
<div style="left:899px;top:206px;width:5px;height:5px;background:#00c;border:1px solid #004"></div>
<div style="left:866px;top:212px;width:87px;height:1px;background:#5a5a5a"></div>
<div style="left:866px;top:213px;width:87px;height:10px;background:#4c4c4e"></div>
<svg style="position:absolute;left:866px;top:214px;" width="7" height="7" viewBox="0 0 7 7"><rect x="0.5" y="0.5" width="6" height="6" fill="#555" stroke="#666" stroke-width="0.5"/><path d="M2,1.5 V5.5 M4,1.5 V5.5 M4,1.5 H5.5 V5.5 H4" stroke="#999" stroke-width="0.7" fill="none"/></svg>
<div style="left:874px;top:213px;width:33px;height:10px;background:#77787b"></div>
<svg style="position:absolute;left:876px;top:214px;" width="9" height="8" viewBox="0 0 9 8"><path d="M0,1 H3 M0,3.5 H3 M0,6 H3" stroke="#222" stroke-width="0.8"/><path d="M3.5,1.5 L6,0.5 L8.5,1.5 L6,2.5 Z M3.5,4 L6,3 L8.5,4 L6,5 Z M3.5,6.5 L6,5.5 L8.5,6.5 L6,7.5 Z" fill="#eee" stroke="#333" stroke-width="0.5"/></svg>
<div class="t" id="t47" style="left:886px;top:215px;font-size:7.5px;color:#eee;transform:scaleX(0.594);">レイヤー</div>
<div style="left:866px;top:223px;width:87px;height:35px;background:#7a7b7e"></div>
<div style="left:866px;top:224px;width:42px;height:10px;background:linear-gradient(#858689,#6e6f72);border:1px solid #5e5e60"></div>
<div class="t" id="t48" style="left:877px;top:225.5px;font-size:7.5px;color:#f0f0f0;transform:scaleX(0.750);">通常</div>
<svg style="position:absolute;left:901px;top:227px;" width="6" height="4" viewBox="0 0 6 4"><path d="M0,0 H6 L3,4 Z" fill="#333"/></svg>
<div style="left:911px;top:225px;width:23px;height:8px;background:#6a6a6c;border:1px solid #555"></div>
<div style="left:912px;top:226px;width:20px;height:4px;background:linear-gradient(#fff,#ccc)"></div>
<div class="t" id="t49" style="left:936px;top:226px;font-size:6.5px;color:#eee;transform:scaleX(0.829);">100</div>
<svg style="position:absolute;left:946px;top:224px;" width="6" height="10" viewBox="0 0 6 10"><path d="M0.5,4 L3,0.5 L5.5,4 Z M0.5,6 L3,9.5 L5.5,6 Z" fill="#222"/></svg>
<div style="left:866px;top:234px;width:87px;height:1px;background:#6a6a6c"></div>
<svg style="position:absolute;left:878px;top:235px;" width="42" height="10" viewBox="0 0 42 10"><ellipse cx="6.5" cy="5.5" rx="3" ry="2.3" fill="#222"/><path d="M3.5,5 H9.5" stroke="#ccc" stroke-width="0.7"/><path d="M15.8,3.5 V9.5" stroke="#222" stroke-width="1.2"/><circle cx="15.8" cy="2.3" r="1.4" fill="#ddd" stroke="#222" stroke-width="0.5"/><rect x="23" y="4.2" width="6" height="5.3" fill="#ddd" stroke="#222" stroke-width="0.8"/><path d="M24,4.2 V2.8 A2,2 0 0 1 28,2.8 V4.2" stroke="#222" stroke-width="0.8" fill="none"/><circle cx="34" cy="3.8" r="2.3" fill="#ccc" stroke="#222" stroke-width="0.7"/><path d="M35,9.5 L39.5,5" stroke="#222" stroke-width="1.4"/></svg>
<div style="left:920px;top:235px;width:14px;height:10px;background:#86878a;border:1px solid #6a6a6c"></div>
<svg style="position:absolute;left:921px;top:236px;" width="12" height="8" viewBox="0 0 12 8"><path d="M2,4 H7 M5,2 L7,4 L5,6" stroke="#a8a8a8" stroke-width="0.8" fill="none"/><circle cx="9" cy="4" r="1.3" fill="#aaa"/></svg>
<div style="left:938px;top:235px;width:14px;height:10px;background:#86878a;border:1px solid #6a6a6c"></div>
<svg style="position:absolute;left:939px;top:236px;" width="12" height="8" viewBox="0 0 12 8"><path d="M1,7 L8,1 M4,3 L7,6 L11,3" stroke="#a8a8a8" stroke-width="0.8" fill="none"/></svg>
<div style="left:866px;top:246px;width:87px;height:1px;background:#6a6a6c"></div>
<svg style="position:absolute;left:872px;top:247px;" width="81" height="10" viewBox="0 0 81 10"><path d="M2,1 H7 L8,2.5 V9 H2 Z" fill="#fafafa" stroke="#222" stroke-width="0.7"/><path d="M11,1 H16 L17,2.5 V9 H11 Z" fill="#fafafa" stroke="#222" stroke-width="0.7"/><path d="M15.5,6 V10 M13.5,8 H17.5" stroke="#222" stroke-width="0.8"/><rect x="20" y="1" width="4" height="8" fill="#ccc" stroke="#222" stroke-width="0.6"/><rect x="24" y="3" width="4" height="6" fill="#fafafa" stroke="#222" stroke-width="0.6"/><circle cx="35" cy="5" r="2.6" fill="#8a8a8a" stroke="#666" stroke-width="0.6"/><path d="M35,3 V7" stroke="#aaa"/><circle cx="45" cy="5" r="3.3" fill="#eee" stroke="#222" stroke-width="0.8"/><path d="M45,2.5 V7.5 M43,5.5 L45,7.5 L47,5.5" stroke="#222" stroke-width="0.8" fill="none"/><rect x="53" y="2" width="7" height="6" fill="#fafafa" stroke="#222" stroke-width="0.7"/><rect x="54.5" y="3.5" width="3" height="3" fill="#222"/><path d="M64,2 A3,3 0 1 1 64,8" stroke="#222" stroke-width="0.9" fill="none"/><path d="M72.5,2.5 H78 L77,9.5 H73.5 Z" fill="#e0e0e0" stroke="#222" stroke-width="0.8"/></svg>
<div style="left:866px;top:257px;width:87px;height:1px;background:#555"></div>
<div style="left:866px;top:258px;width:80px;height:284px;background:#7a7b7f"></div>
<div style="left:946px;top:258px;width:6px;height:284px;background:#6c6d70;border-left:1px solid #666"></div>
<div style="left:866px;top:258px;width:80px;height:16px;background:#7a7b7e;border-bottom:1px solid #666"></div>
<div style="left:886px;top:258px;width:60px;height:16px;background:linear-gradient(#8aa2b2,#7590a2);border:1px solid #5d7384"></div>
<div style="left:866px;top:274px;width:80px;height:17px;background:#7a7b7e;border-bottom:1px solid #666"></div>
<div style="left:876px;top:258px;width:1px;height:33px;background:#666"></div>
<div style="left:885px;top:258px;width:1px;height:33px;background:#666"></div>
<svg style="position:absolute;left:867px;top:263px;" width="9" height="6" viewBox="0 0 9 6"><path d="M0.5,3 Q4.5,-0.5 8.5,3 Q4.5,6.5 0.5,3 Z" fill="#eee" stroke="#222" stroke-width="0.6"/><circle cx="4.5" cy="3" r="1.5" fill="#111"/></svg>
<svg style="position:absolute;left:867px;top:280px;" width="9" height="6" viewBox="0 0 9 6"><path d="M0.5,3 Q4.5,-0.5 8.5,3 Q4.5,6.5 0.5,3 Z" fill="#eee" stroke="#222" stroke-width="0.6"/><circle cx="4.5" cy="3" r="1.5" fill="#111"/></svg>
<svg style="position:absolute;left:877px;top:261px;" width="8" height="9" viewBox="0 0 8 9"><path d="M1,8 L6.5,2" stroke="#222" stroke-width="1"/><path d="M6.5,2 L7.5,1" stroke="#222" stroke-width="1.6"/></svg>
<div style="left:889px;top:259px;width:18px;height:14px;background:#222"></div>
<svg style="position:absolute;left:890px;top:260px;" width="16" height="12" viewBox="0 0 16 12"><rect width="16" height="12" fill="#fff"/><g fill="#bbb"><rect x="2" y="0" width="2" height="2"/><rect x="6" y="0" width="2" height="2"/><rect x="10" y="0" width="2" height="2"/><rect x="14" y="0" width="2" height="2"/><rect x="0" y="2" width="2" height="2"/><rect x="4" y="2" width="2" height="2"/><rect x="8" y="2" width="2" height="2"/><rect x="12" y="2" width="2" height="2"/><rect x="16" y="2" width="2" height="2"/><rect x="2" y="4" width="2" height="2"/><rect x="6" y="4" width="2" height="2"/><rect x="10" y="4" width="2" height="2"/><rect x="14" y="4" width="2" height="2"/><rect x="0" y="6" width="2" height="2"/><rect x="4" y="6" width="2" height="2"/><rect x="8" y="6" width="2" height="2"/><rect x="12" y="6" width="2" height="2"/><rect x="16" y="6" width="2" height="2"/><rect x="2" y="8" width="2" height="2"/><rect x="6" y="8" width="2" height="2"/><rect x="10" y="8" width="2" height="2"/><rect x="14" y="8" width="2" height="2"/><rect x="0" y="10" width="2" height="2"/><rect x="4" y="10" width="2" height="2"/><rect x="8" y="10" width="2" height="2"/><rect x="12" y="10" width="2" height="2"/><rect x="16" y="10" width="2" height="2"/><rect x="2" y="12" width="2" height="2"/><rect x="6" y="12" width="2" height="2"/><rect x="10" y="12" width="2" height="2"/><rect x="14" y="12" width="2" height="2"/></g></svg>
<div style="left:893.5px;top:261px;width:9.5px;height:9.5px;border-radius:50%;background:#000"></div>
<div class="t" id="t50" style="left:908px;top:259px;font-size:6.5px;color:#f4f4f4;transform:scaleX(0.771);">100 %通常</div>
<div class="t" id="t51" style="left:908px;top:266.5px;font-size:6.5px;color:#f4f4f4;transform:scaleX(0.748);">レイヤー 1</div>
<div style="left:878px;top:279px;width:6px;height:9px;background:#86878a;border:1px solid #707072"></div>
<div style="left:889px;top:276px;width:17px;height:13px;background:#fff;border:1px solid #222"></div>
<div style="left:908px;top:275px;width:11px;height:12px;background:#6c6d70;border:1px solid #555"></div>
<svg style="position:absolute;left:909px;top:276px;" width="9" height="10" viewBox="0 0 9 10"><path d="M1,1 H5.5 L8,3.5 V9 H1 Z" fill="#fafafa" stroke="#222" stroke-width="0.7"/><path d="M2.5,3 V6.5" stroke="#333" stroke-width="1.2"/></svg>
<div class="t" id="t52" style="left:919px;top:283px;font-size:7px;color:#f4f4f4;transform:scaleX(0.857);">用紙</div>
<div style="left:866px;top:539px;width:87px;height:3px;background:#6e6e70;border-top:1px solid #5a5a5a"></div>
<div style="left:747px;top:531px;width:6px;height:5px;background:#8a8a8a;border:1px solid #555"></div>
<div style="left:741px;top:537px;width:6px;height:5px;background:#8a8a8a;border:1px solid #555"></div>
<div style="left:617px;top:16px;width:128px;height:129px;background:#444;border-left:2px solid #5e5e60;border-top:2px solid #5e5e60"></div>
<div style="left:619px;top:26px;width:124px;height:117px;background:#7a7b7e"></div>
<div style="left:619px;top:18px;width:124px;height:8px;background:linear-gradient(#5a5a5a,#474747)"></div>
<svg style="position:absolute;left:621px;top:19px;" width="6" height="6" viewBox="0 0 6 6"><path d="M1,1 V5 M3,1 V5 M3,1 H5 V5 H3" stroke="#999" stroke-width="0.8" fill="none"/></svg>
<div class="t" id="t53" style="left:661.0px;top:19px;font-size:7px;color:#d8d8d8;transform:scaleX(0.816);">カラーサークル</div>
<svg style="position:absolute;left:726px;top:18px;" width="16" height="8" viewBox="0 0 16 8"><circle cx="4" cy="4" r="3.5" fill="#2c2c2c" stroke="#777" stroke-width="0.6"/><rect x="2" y="4.5" width="4" height="1" fill="#ddd"/><circle cx="12" cy="4" r="3.5" fill="#2c2c2c" stroke="#777" stroke-width="0.6"/><path d="M10.3,2.3 L13.7,5.7 M13.7,2.3 L10.3,5.7" stroke="#eee" stroke-width="1.1"/></svg>
<div style="left:626px;top:27px;width:108px;height:108px;border-radius:50%;background:conic-gradient(from 300deg,#f00,#ff0,#0f0,#0ff,#00f,#f0f,#f00);"></div>
<div style="left:635px;top:36px;width:90px;height:90px;border-radius:50%;background:#7a7b7e;box-shadow:0 0 0 0.5px #556"></div>
<div style="left:651px;top:51px;width:59px;height:59px;background:linear-gradient(to top,#000,rgba(0,0,0,0)),linear-gradient(to right,#fff,#f00)"></div>
<div style="left:632.5px;top:53px;width:9px;height:5.5px;background:#e22;border:1.2px solid #f4f4f4;outline:0.5px solid #555;transform:rotate(32deg)"></div>
<svg style="position:absolute;left:647px;top:106px;" width="8" height="8" viewBox="0 0 8 8"><circle cx="4" cy="4" r="2.5" fill="none" stroke="#ddd" stroke-width="1"/><circle cx="4" cy="4" r="3.3" fill="none" stroke="#333" stroke-width="0.6"/></svg>
<div style="left:620px;top:112px;width:13px;height:14px;background:#868688;border:1px solid #6e6e70"></div>
<div style="left:627px;top:121px;width:14px;height:14px;background:#000;border:1px solid #6ab0e0;box-shadow:0 0 0 1px #333 inset"></div>
<svg style="position:absolute;left:620px;top:136px;" width="21" height="6" viewBox="0 0 21 6"><rect width="21" height="6" fill="#fff"/><g fill="#8a8a8a"><rect x="2.5" y="0.0" width="2.5" height="2.5"/><rect x="7.5" y="0.0" width="2.5" height="2.5"/><rect x="12.5" y="0.0" width="2.5" height="2.5"/><rect x="17.5" y="0.0" width="2.5" height="2.5"/><rect x="0.0" y="2.5" width="2.5" height="2.5"/><rect x="5.0" y="2.5" width="2.5" height="2.5"/><rect x="10.0" y="2.5" width="2.5" height="2.5"/><rect x="15.0" y="2.5" width="2.5" height="2.5"/><rect x="20.0" y="2.5" width="2.5" height="2.5"/><rect x="2.5" y="5.0" width="2.5" height="2.5"/><rect x="7.5" y="5.0" width="2.5" height="2.5"/><rect x="12.5" y="5.0" width="2.5" height="2.5"/><rect x="17.5" y="5.0" width="2.5" height="2.5"/></g></svg>
<svg style="position:absolute;left:678px;top:133px;" width="66" height="10" viewBox="0 0 66 10"><rect x="2" y="4" width="5" height="5" fill="#222"/><path d="M3,5 L6,8 M6,5 L3,8" stroke="#ddd" stroke-width="0.7"/><ellipse cx="13.5" cy="6.5" rx="1.3" ry="2.5" fill="#aaa"/><rect x="18" y="4" width="5" height="5" fill="#34384a"/><path d="M19.5,5 V8 M19.5,5 H21.5 V6.5 H19.5" stroke="#ddd" stroke-width="0.7" fill="none"/><ellipse cx="29.5" cy="6.5" rx="1.3" ry="2.5" fill="#aaa"/><rect x="35" y="4" width="5" height="5" fill="#222"/><path d="M36,5 L37.5,8 L39,5" stroke="#ddd" stroke-width="0.7" fill="none"/><ellipse cx="46" cy="6.5" rx="1.3" ry="2.5" fill="#aaa"/></svg>
<div style="left:731px;top:132px;width:9px;height:9px;border-radius:50%;background:conic-gradient(#f00,#ff0,#0f0,#0ff,#00f,#f0f,#f00)"></div>
<div style="left:733px;top:134px;width:5px;height:5px;border-radius:50%;background:#555"></div>
<div style="left:617px;top:143px;width:128px;height:69px;background:#444;border-left:2px solid #5e5e60"></div>
<div style="left:619px;top:154px;width:124px;height:56px;background:#7a7b7e"></div>
<div style="left:619px;top:146px;width:124px;height:8px;background:linear-gradient(#5a5a5a,#474747)"></div>
<svg style="position:absolute;left:621px;top:147px;" width="6" height="6" viewBox="0 0 6 6"><path d="M1,1 V5 M3,1 V5 M3,1 H5 V5 H3" stroke="#999" stroke-width="0.8" fill="none"/></svg>
<div class="t" id="t54" style="left:660.0px;top:147px;font-size:7px;color:#d8d8d8;transform:scaleX(0.750);">カラースライダー</div>
<svg style="position:absolute;left:726px;top:146px;" width="16" height="8" viewBox="0 0 16 8"><circle cx="4" cy="4" r="3.5" fill="#2c2c2c" stroke="#777" stroke-width="0.6"/><rect x="2" y="4.5" width="4" height="1" fill="#ddd"/><circle cx="12" cy="4" r="3.5" fill="#2c2c2c" stroke="#777" stroke-width="0.6"/><path d="M10.3,2.3 L13.7,5.7 M13.7,2.3 L10.3,5.7" stroke="#eee" stroke-width="1.1"/></svg>
<div style="left:620px;top:156px;width:10px;height:40px;background:#707174;border:1px solid #5a5a5a"></div>
<svg style="position:absolute;left:620px;top:156px;" width="10" height="40" viewBox="0 0 10 40"><text transform="translate(8,39) rotate(-90)" font-family="Liberation Sans" font-size="7" fill="#a0a0a0" textLength="38" lengthAdjust="spacingAndGlyphs">CMY  HSV  RGB</text><path d="M1,13 H9 M1,26 H9" stroke="#5a5a5a" stroke-width="0.8"/></svg>
<div class="t" id="t55" style="left:630px;top:160px;font-size:7px;color:#ddd;transform:scaleX(0.988);">R</div>
<div style="left:637px;top:161px;width:80px;height:5px;background:linear-gradient(to right,#000,#f00);border-top:1px solid #333"></div>
<svg style="position:absolute;left:637px;top:166px;" width="6" height="4" viewBox="0 0 6 4"><path d="M0,4 L3,0 L6,4 Z" fill="#555"/></svg>
<div style="left:725px;top:160px;width:4px;height:6px;background:#aaa;border-radius:2px"></div>
<svg style="position:absolute;left:734px;top:159px;" width="7" height="9" viewBox="0 0 7 9"><path d="M0.5,3.5 L3.5,0.5 L6.5,3.5 Z M0.5,5.5 L3.5,8.5 L6.5,5.5 Z" fill="#2a2a2a"/></svg>
<div class="t" id="t56" style="left:630px;top:173px;font-size:7px;color:#ddd;transform:scaleX(0.917);">G</div>
<div style="left:637px;top:174px;width:80px;height:5px;background:linear-gradient(to right,#000,#0c0);border-top:1px solid #333"></div>
<svg style="position:absolute;left:637px;top:179px;" width="6" height="4" viewBox="0 0 6 4"><path d="M0,4 L3,0 L6,4 Z" fill="#555"/></svg>
<div style="left:725px;top:173px;width:4px;height:6px;background:#aaa;border-radius:2px"></div>
<svg style="position:absolute;left:734px;top:172px;" width="7" height="9" viewBox="0 0 7 9"><path d="M0.5,3.5 L3.5,0.5 L6.5,3.5 Z M0.5,5.5 L3.5,8.5 L6.5,5.5 Z" fill="#2a2a2a"/></svg>
<div class="t" id="t57" style="left:630px;top:186px;font-size:7px;color:#ddd;transform:scaleX(1.070);">B</div>
<div style="left:637px;top:187px;width:80px;height:5px;background:linear-gradient(to right,#000,#00f);border-top:1px solid #333"></div>
<svg style="position:absolute;left:637px;top:192px;" width="6" height="4" viewBox="0 0 6 4"><path d="M0,4 L3,0 L6,4 Z" fill="#555"/></svg>
<div style="left:725px;top:186px;width:4px;height:6px;background:#aaa;border-radius:2px"></div>
<svg style="position:absolute;left:734px;top:185px;" width="7" height="9" viewBox="0 0 7 9"><path d="M0.5,3.5 L3.5,0.5 L6.5,3.5 Z M0.5,5.5 L3.5,8.5 L6.5,5.5 Z" fill="#2a2a2a"/></svg>
<div style="left:620px;top:199px;width:39px;height:11px;background:#858587;border:1px solid #6a6a6c"></div>
<div style="left:660px;top:199px;width:41px;height:11px;background:#000;border:1px solid #6ab0e0;box-shadow:0 0 0 1px #333 inset"></div>
<svg style="position:absolute;left:703px;top:199px;" width="40" height="11" viewBox="0 0 40 11"><rect width="40" height="11" fill="#fff"/><g fill="#8a8a8a"><rect x="3.5" y="0.0" width="3.5" height="3.5"/><rect x="10.5" y="0.0" width="3.5" height="3.5"/><rect x="17.5" y="0.0" width="3.5" height="3.5"/><rect x="24.5" y="0.0" width="3.5" height="3.5"/><rect x="31.5" y="0.0" width="3.5" height="3.5"/><rect x="38.5" y="0.0" width="3.5" height="3.5"/><rect x="0.0" y="3.5" width="3.5" height="3.5"/><rect x="7.0" y="3.5" width="3.5" height="3.5"/><rect x="14.0" y="3.5" width="3.5" height="3.5"/><rect x="21.0" y="3.5" width="3.5" height="3.5"/><rect x="28.0" y="3.5" width="3.5" height="3.5"/><rect x="35.0" y="3.5" width="3.5" height="3.5"/><rect x="3.5" y="7.0" width="3.5" height="3.5"/><rect x="10.5" y="7.0" width="3.5" height="3.5"/><rect x="17.5" y="7.0" width="3.5" height="3.5"/><rect x="24.5" y="7.0" width="3.5" height="3.5"/><rect x="31.5" y="7.0" width="3.5" height="3.5"/><rect x="38.5" y="7.0" width="3.5" height="3.5"/><rect x="0.0" y="10.5" width="3.5" height="3.5"/><rect x="7.0" y="10.5" width="3.5" height="3.5"/><rect x="14.0" y="10.5" width="3.5" height="3.5"/><rect x="21.0" y="10.5" width="3.5" height="3.5"/><rect x="28.0" y="10.5" width="3.5" height="3.5"/><rect x="35.0" y="10.5" width="3.5" height="3.5"/></g></svg>
<div style="left:652px;top:212px;width:93px;height:121px;background:#444;border-left:2px solid #5e5e60"></div>
<div style="left:654px;top:221px;width:89px;height:110px;background:#7a7b7e"></div>
<div style="left:654px;top:214px;width:89px;height:8px;background:linear-gradient(#5a5a5a,#474747)"></div>
<svg style="position:absolute;left:656px;top:215px;" width="6" height="6" viewBox="0 0 6 6"><path d="M1,1 V5 M3,1 V5 M3,1 H5 V5 H3" stroke="#999" stroke-width="0.8" fill="none"/></svg>
<div class="t" id="t58" style="left:680.5px;top:215px;font-size:7px;color:#d8d8d8;transform:scaleX(0.857);">カラーセット</div>
<svg style="position:absolute;left:726px;top:214px;" width="16" height="8" viewBox="0 0 16 8"><circle cx="4" cy="4" r="3.5" fill="#2c2c2c" stroke="#777" stroke-width="0.6"/><rect x="2" y="4.5" width="4" height="1" fill="#ddd"/><circle cx="12" cy="4" r="3.5" fill="#2c2c2c" stroke="#777" stroke-width="0.6"/><path d="M10.3,2.3 L13.7,5.7 M13.7,2.3 L10.3,5.7" stroke="#eee" stroke-width="1.1"/></svg>
<div style="left:655px;top:222px;width:82px;height:10px;background:linear-gradient(#8a8b8e,#737477);border:1px solid #5e5e60"></div>
<div class="t" id="t59" style="left:676px;top:224px;font-size:7.5px;color:#eee;transform:scaleX(0.667);">カラーセット</div>
<svg style="position:absolute;left:721px;top:225px;" width="6" height="4" viewBox="0 0 6 4"><path d="M0,0 H6 L3,4 Z" fill="#333"/></svg>
<svg style="position:absolute;left:728px;top:222px;" width="15" height="10" viewBox="0 0 15 10"><path d="M1,1 L3,4 L5,1 M3,4 V9" stroke="#222" stroke-width="1" fill="none"/><rect x="9" y="3" width="5" height="6" fill="#ddd" stroke="#333" stroke-width="0.7"/></svg>
<svg style="position:absolute;left:655px;top:232px;" width="80" height="86" viewBox="0 0 80 86"><defs><pattern id="csp" x="-1" y="-0.75" width="10" height="10" patternUnits="userSpaceOnUse"><rect width="10" height="10" fill="#fff"/><g fill="#666"><rect x="4" y="1" width="3" height="3"/><rect x="1" y="4" width="3" height="3"/><rect x="7" y="4" width="3" height="3"/><rect x="4" y="7" width="3" height="3"/></g><path d="M0.5,0 V10 M0,0.5 H10" stroke="#b0b0b0" stroke-width="1"/></pattern></defs><rect width="80" height="86" fill="url(#csp)"/></svg>
<div style="left:655px;top:232px;width:10px;height:10px;background:#1c1c1c"></div>
<div style="left:665px;top:232px;width:10px;height:10px;background:#343434"></div>
<div style="left:675px;top:232px;width:10px;height:10px;background:#4a4a4a"></div>
<div style="left:655px;top:242px;width:10px;height:10px;background:#696969"></div>
<div style="left:665px;top:242px;width:10px;height:10px;background:#7b7b7b"></div>
<div style="left:675px;top:242px;width:10px;height:10px;background:#909090"></div>
<div style="left:655px;top:252px;width:10px;height:10px;background:#bebebe"></div>
<div style="left:665px;top:252px;width:10px;height:10px;background:#d4d4d4"></div>
<div style="left:675px;top:252px;width:10px;height:10px;background:#e8e8e8"></div>
<div style="left:655px;top:272px;width:10px;height:10px;background:#fbe0d0"></div>
<div style="left:665px;top:272px;width:10px;height:10px;background:#f8cdbc"></div>
<div style="left:675px;top:272px;width:10px;height:10px;background:#dc9e7c"></div>
<div style="left:695px;top:272px;width:10px;height:10px;background:#fce4d4"></div>
<div style="left:705px;top:272px;width:10px;height:10px;background:#f0a17b"></div>
<div style="left:655px;top:282px;width:10px;height:10px;background:#fad6c4"></div>
<div style="left:665px;top:282px;width:10px;height:10px;background:#dba091"></div>
<div style="left:675px;top:282px;width:10px;height:10px;background:#c37468"></div>
<div style="left:655px;top:302px;width:10px;height:10px;background:#6c615f"></div>
<div style="left:675px;top:242px;width:10px;height:10px;background:#909090;border:1px solid #f05050"></div>
<div style="left:735px;top:232px;width:7px;height:86px;background:#6c6d70"></div>
<div style="left:736px;top:233px;width:5px;height:5px;background:#888"></div>
<div style="left:736px;top:245px;width:5px;height:10px;background:#8a8a8a;border-radius:2px"></div>
<div style="left:736px;top:310px;width:5px;height:6px;background:#888"></div>
<div style="left:654px;top:318px;width:89px;height:13px;background:#7a7b7e"></div>
<div style="left:655px;top:324px;width:5px;height:5px;background:#b00;border:1px solid #400"></div>
<div style="left:671px;top:324px;width:5px;height:5px;background:#0a0;border:1px solid #040"></div>
<div style="left:687px;top:324px;width:5px;height:5px;background:#00c;border:1px solid #004"></div>
<svg style="position:absolute;left:713px;top:319px;" width="30" height="11" viewBox="0 0 30 11"><path d="M2,1 L6,5 L9,9 L6,10 L4,7" fill="#ddd" stroke="#222" stroke-width="0.8"/><circle cx="16" cy="5" r="3" fill="#333"/><path d="M18,7 L21,10 M13,8 L16,5" stroke="#222" stroke-width="1.3"/><path d="M24,3 H29 L28,10 H25 Z" fill="#e0e0e0" stroke="#333" stroke-width="0.8"/></svg>
<script>(function(){var W=[26, 211, 16, 9.5, 13, 9.5, 30, 9.5, 19, 9.5, 24, 9.5, 14, 9.5, 20, 9.5, 23, 9.5, 15, 9.5, 24, 10, 8, 53, 24, 30, 24, 33, 30, 22.5, 22.5, 34, 60, 22, 14, 28, 13, 12, 10, 26, 9, 26, 4, 28, 11, 9, 18, 19, 12, 9, 25, 25, 12, 40, 42, 5, 5, 5, 36, 32];var els=document.querySelectorAll('.t');for(var i=0;i<els.length;i++){var e=els[i];var k=parseInt(e.id.slice(1));e.style.transform='none';var w=e.getBoundingClientRect().width;if(w>0&&W[k])e.style.transform='scaleX('+(W[k]/w)+')';}var p=document.createElement('span');p.style.cssText='position:absolute;left:-999px;top:0;font-size:40px;white-space:nowrap;font-family:\'Liberation Sans\',sans-serif';p.textContent='\u30a2\u30a4\u30a6';var q=p.cloneNode();q.textContent='\ue000\ue001\ue002';document.body.appendChild(p);document.body.appendChild(q);if(Math.abs(p.getBoundingClientRect().width-q.getBoundingClientRect().width)<0.5){for(var j=0;j<els.length;j++){if(/[\u3000-\u9fff\uff00-\uffef]/.test(els[j].textContent))els[j].style.opacity='0.55';}}p.remove();q.remove();})();</script></body></html>
